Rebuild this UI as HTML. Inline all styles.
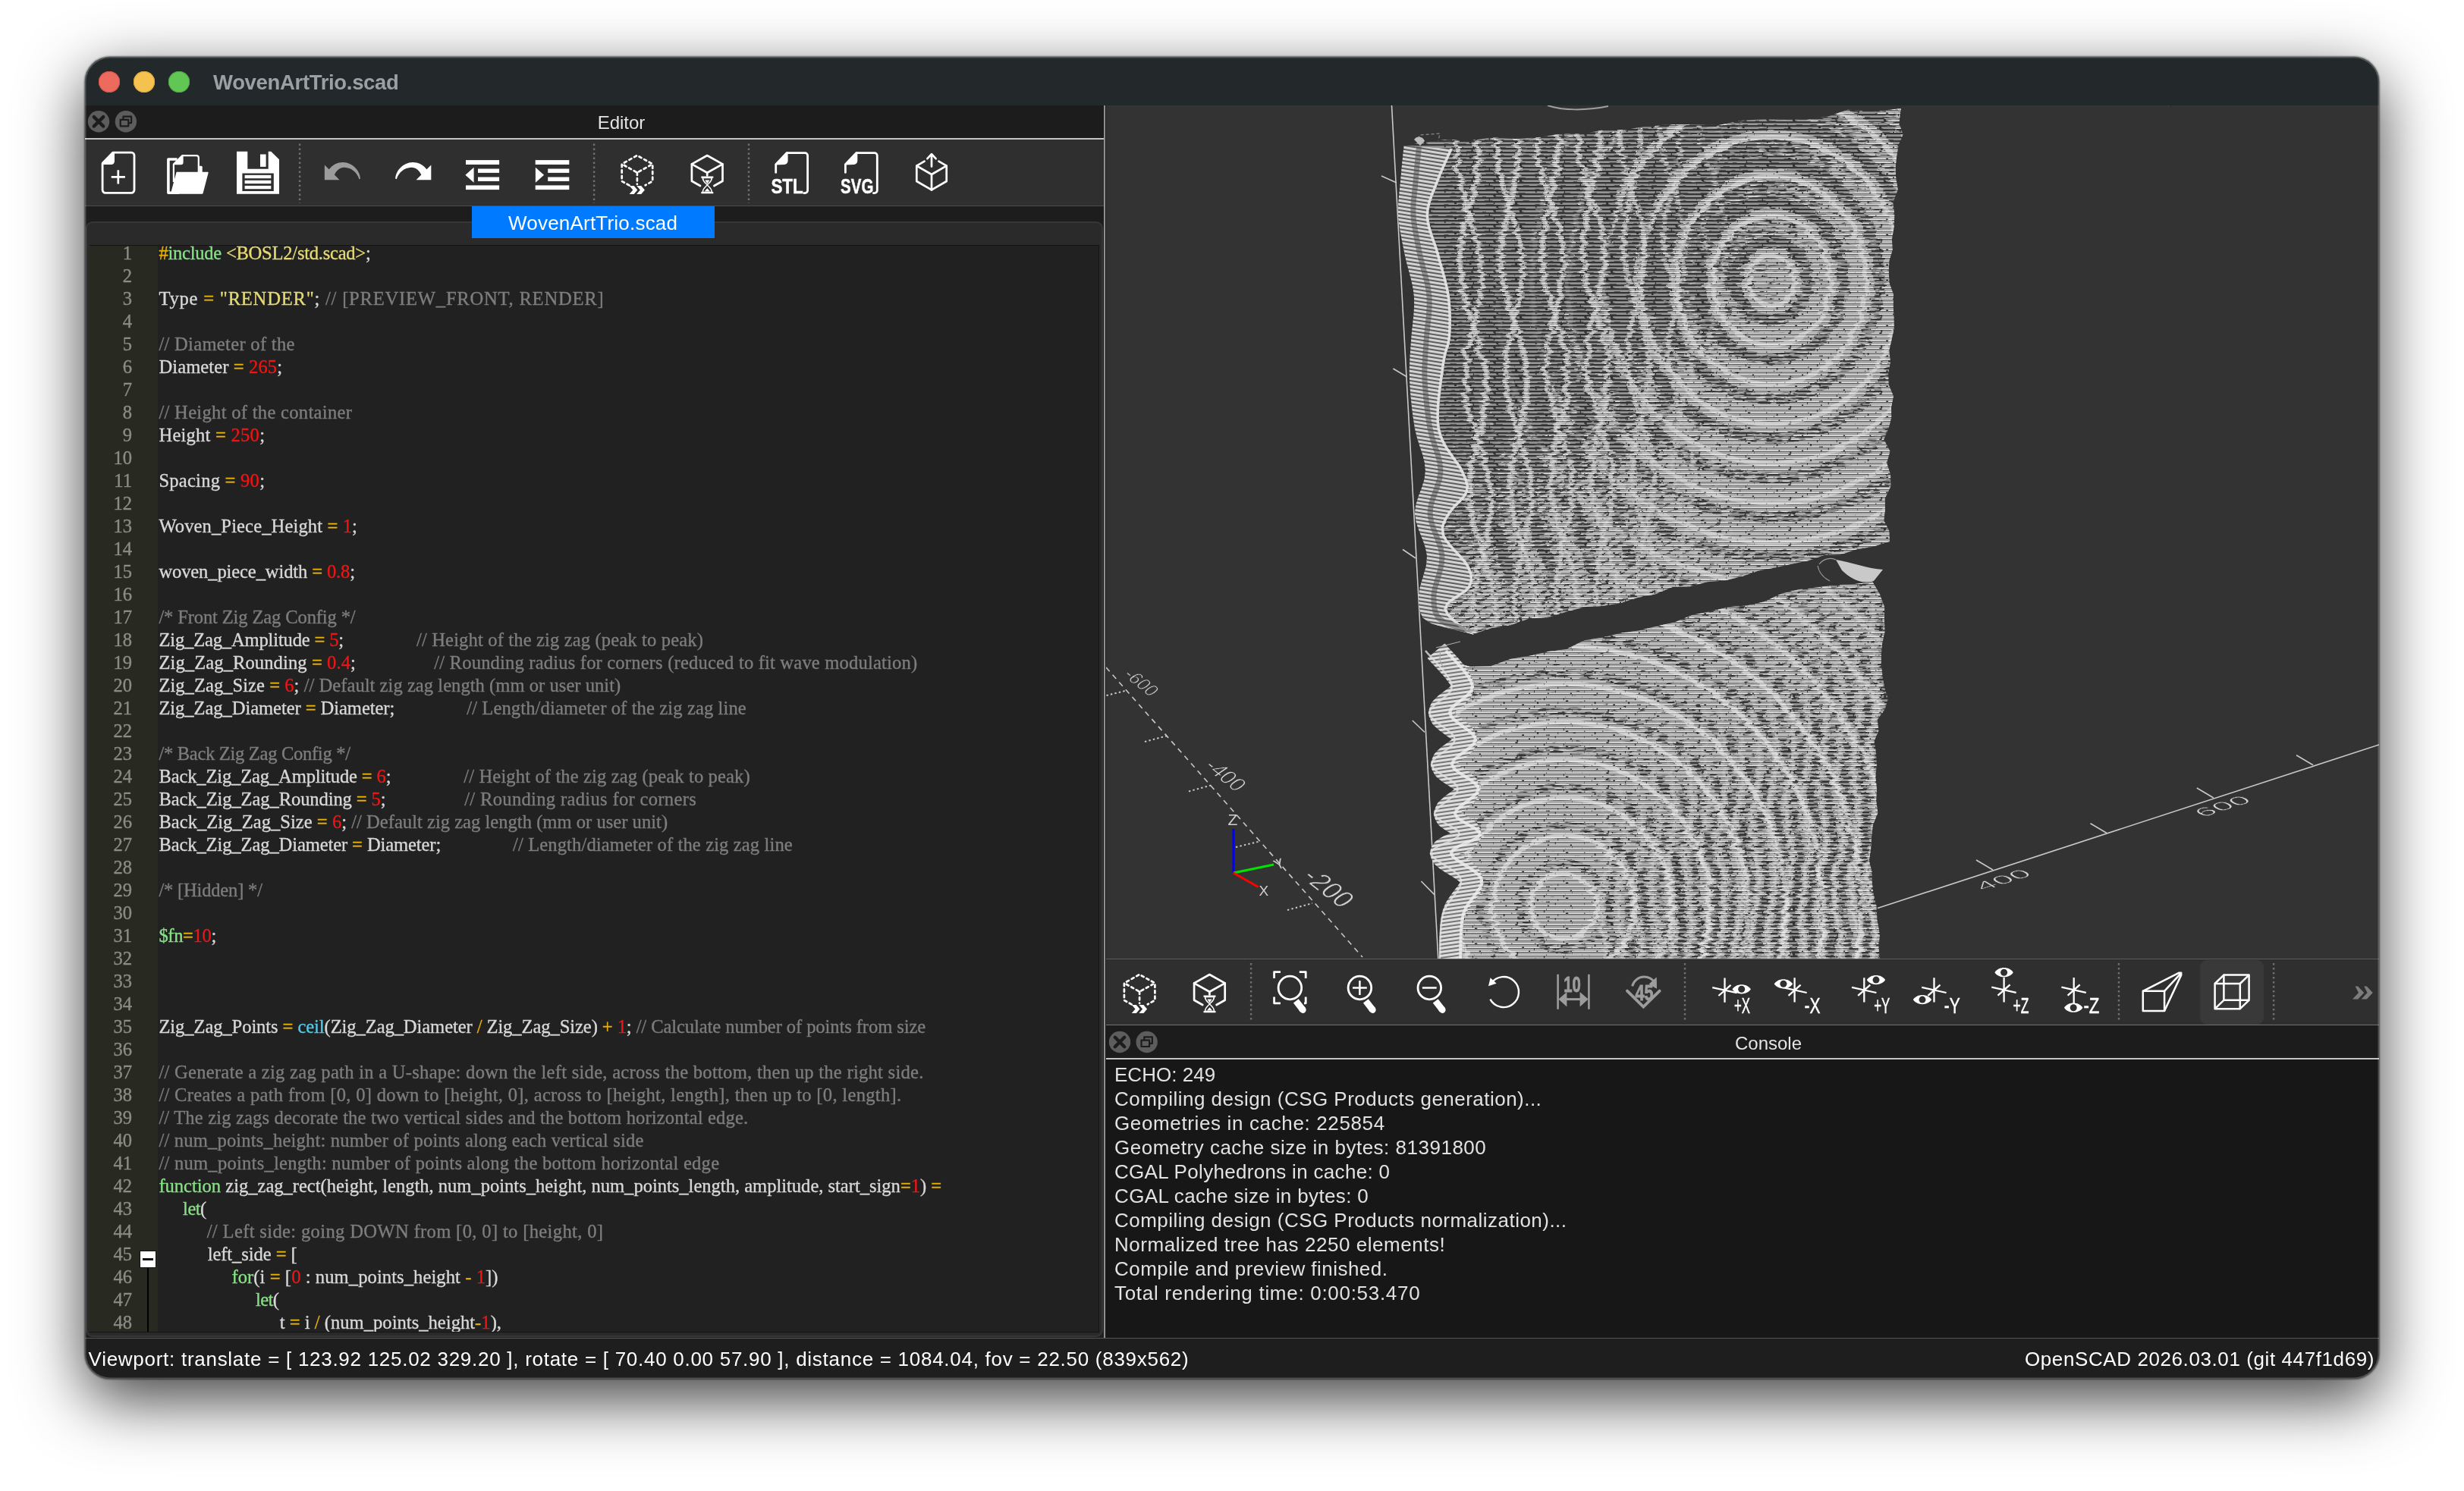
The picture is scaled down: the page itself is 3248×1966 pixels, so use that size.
<!DOCTYPE html>
<html lang="en"><head><meta charset="utf-8"><title>WovenArtTrio.scad</title>
<style>
*{box-sizing:border-box;margin:0;padding:0}
html,body{width:3248px;height:1966px;background:#fff;overflow:hidden}
body{position:relative;font-family:"Liberation Sans",sans-serif;color:#e6e6e6}
#shadow{position:absolute;left:112px;top:75px;width:3024px;height:1743px;border-radius:33px;
 box-shadow:0 27px 84px 0 rgba(0,0,0,.76),0 0 2px 1px rgba(0,0,0,.5);}
#win{position:absolute;left:112px;top:75px;width:3024px;height:1743px;border-radius:33px;overflow:hidden;background:#1e1e1e}
#pg{position:absolute;left:-112px;top:-75px;width:3248px;height:1966px;will-change:transform}
#pg div,#pg svg,#pg span.a{position:absolute}
#rim{position:absolute;left:112px;top:75px;width:3024px;height:1743px;border-radius:33px;
 box-shadow:inset 0 0 0 1.5px rgba(255,255,255,.22);pointer-events:none}
.t{white-space:pre;line-height:1}
#title{left:0;top:75px;width:3248px;height:64px;background:#23282b}
.tl{width:28px;height:28px;border-radius:50%;top:94px}
#ttext{left:281px;top:95px;font-size:27.5px;font-weight:bold;color:#9ba0a4}
.dockhdr{background:#1c1c1c}
.dtitle{font-size:24px;color:#e4e4e4;text-align:center}
.tb{background:#2f2f2f}
.sep{width:0;border-left:3px dotted #6a6a6a}
#code{font-family:"Liberation Serif",serif;font-size:24.6px;color:#d2d2d2;-webkit-text-stroke:.35px currentColor}
#code .l{left:0;height:30px;white-space:pre;line-height:30px}
#code .n{left:0;width:56px;text-align:right;color:#8c8c84;white-space:pre;line-height:30px;height:30px}
.c{color:#7d7d7d}.k{color:#86e086}.o{color:#e8b000}.r{color:#f01414}.s{color:#e6da74}.f{color:#52c8e8}.w{color:#d8d8d8}
#con .l{left:1469px;font-size:26px;color:#e2e2e2;white-space:pre;line-height:32px;height:32px}
</style></head><body>
<div id="shadow"></div>
<div id="win"><div id="pg">
<div id="title"></div>
<div class="tl" style="left:130px;background:#ed6a5f;box-shadow:inset 0 0 0 1px #d5554b"></div>
<div class="tl" style="left:176px;background:#f5c24f;box-shadow:inset 0 0 0 1px #d9a73c"></div>
<div class="tl" style="left:222px;background:#62c655;box-shadow:inset 0 0 0 1px #4eaa42"></div>
<div id="ttext" class="t" style="letter-spacing:-0.330px;">WovenArtTrio.scad</div>

<!-- left dock: editor -->
<div class="dockhdr" style="left:112px;top:139px;width:1343px;height:43px"></div>
<div style="left:112px;top:182px;width:1343px;height:2px;background:#c4c4c4"></div>
<div class="dtitle t" id="edt" style="left:701px;top:150px;width:236px;">Editor</div>
<div class="tb" style="left:112px;top:184px;width:1343px;height:87px"></div>
<div style="left:112px;top:271px;width:1343px;height:1px;background:#4c4c4c"></div>
<div style="left:112px;top:272px;width:1343px;height:22px;background:#1d1d1d"></div>
<div style="left:113px;top:292px;width:1341px;height:1471px;background:#2a2a2a;border:2px solid #363636;border-radius:9px"></div>
<div id="tab" style="left:622px;top:272px;width:320px;height:42px;background:#007aff"></div>
<div class="t" id="tabt" style="left:670px;top:281px;font-size:26px;color:#fff;letter-spacing:0.209px;">WovenArtTrio.scad</div>
<div style="left:118px;top:323px;width:1331px;height:1434px;background:#141414"></div>
<div id="code" style="left:118px;top:324px;width:1330px;height:1432px;background:#212121;overflow:hidden">
<div style="left:0;top:0;width:90px;height:1432px;background:#282a22"></div>
<div class="n" style="top:-5.5px">1</div>
<div class="l" id="c1_0" style="left:91.4px;top:-5.5px;letter-spacing:-0.265px;"><span class="o">#</span><span class="k">include</span><span class="w"> </span><span class="s">&lt;BOSL2/std.scad&gt;</span><span class="w">;</span></div>
<div class="n" style="top:24.5px">2</div>
<div class="n" style="top:54.5px">3</div>
<div class="l" id="c3_0" style="left:91.4px;top:54.5px;letter-spacing:0.774px;"><span class="w">Type </span><span class="o">=</span><span class="w"> </span><span class="s">&quot;RENDER&quot;</span><span class="w">; </span><span class="c">// [PREVIEW_FRONT, RENDER]</span></div>
<div class="n" style="top:84.5px">4</div>
<div class="n" style="top:114.5px">5</div>
<div class="l" id="c5_0" style="left:91.4px;top:114.5px;letter-spacing:0.287px;"><span class="c">// Diameter of the</span></div>
<div class="n" style="top:144.5px">6</div>
<div class="l" id="c6_0" style="left:91.4px;top:144.5px;letter-spacing:0.085px;"><span class="w">Diameter </span><span class="o">=</span><span class="w"> </span><span class="r">265</span><span class="w">;</span></div>
<div class="n" style="top:174.5px">7</div>
<div class="n" style="top:204.5px">8</div>
<div class="l" id="c8_0" style="left:91.4px;top:204.5px;letter-spacing:0.291px;"><span class="c">// Height of the container</span></div>
<div class="n" style="top:234.5px">9</div>
<div class="l" id="c9_0" style="left:91.4px;top:234.5px;letter-spacing:0.226px;"><span class="w">Height </span><span class="o">=</span><span class="w"> </span><span class="r">250</span><span class="w">;</span></div>
<div class="n" style="top:264.5px">10</div>
<div class="n" style="top:294.5px">11</div>
<div class="l" id="c11_0" style="left:91.4px;top:294.5px;letter-spacing:0.226px;"><span class="w">Spacing </span><span class="o">=</span><span class="w"> </span><span class="r">90</span><span class="w">;</span></div>
<div class="n" style="top:324.5px">12</div>
<div class="n" style="top:354.5px">13</div>
<div class="l" id="c13_0" style="left:91.4px;top:354.5px;letter-spacing:0.106px;"><span class="w">Woven_Piece_Height </span><span class="o">=</span><span class="w"> </span><span class="r">1</span><span class="w">;</span></div>
<div class="n" style="top:384.5px">14</div>
<div class="n" style="top:414.5px">15</div>
<div class="l" id="c15_0" style="left:91.4px;top:414.5px;letter-spacing:-0.135px;"><span class="w">woven_piece_width </span><span class="o">=</span><span class="w"> </span><span class="r">0.8</span><span class="w">;</span></div>
<div class="n" style="top:444.5px">16</div>
<div class="n" style="top:474.5px">17</div>
<div class="l" id="c17_0" style="left:91.4px;top:474.5px;letter-spacing:-0.151px;"><span class="c">/* Front Zig Zag Config */</span></div>
<div class="n" style="top:504.5px">18</div>
<div class="l" id="c18_0" style="left:91.4px;top:504.5px;letter-spacing:-0.177px;"><span class="w">Zig_Zag_Amplitude </span><span class="o">=</span><span class="w"> </span><span class="r">5</span><span class="w">;</span></div>
<div class="l" id="c18_1" style="left:431.0px;top:504.5px;letter-spacing:0.132px;"><span class="c">// Height of the zig zag (peak to peak)</span></div>
<div class="n" style="top:534.5px">19</div>
<div class="l" id="c19_0" style="left:91.4px;top:534.5px;letter-spacing:0.079px;"><span class="w">Zig_Zag_Rounding </span><span class="o">=</span><span class="w"> </span><span class="r">0.4</span><span class="w">;</span></div>
<div class="l" id="c19_1" style="left:454.3px;top:534.5px;letter-spacing:0.171px;"><span class="c">// Rounding radius for corners (reduced to fit wave modulation)</span></div>
<div class="n" style="top:564.5px">20</div>
<div class="l" id="c20_0" style="left:91.4px;top:564.5px;letter-spacing:0.024px;"><span class="w">Zig_Zag_Size </span><span class="o">=</span><span class="w"> </span><span class="r">6</span><span class="w">; </span><span class="c">// Default zig zag length (mm or user unit)</span></div>
<div class="n" style="top:594.5px">21</div>
<div class="l" id="c21_0" style="left:91.4px;top:594.5px;letter-spacing:-0.078px;"><span class="w">Zig_Zag_Diameter </span><span class="o">=</span><span class="w"> Diameter;</span></div>
<div class="l" id="c21_1" style="left:497.2px;top:594.5px;letter-spacing:0.106px;"><span class="c">// Length/diameter of the zig zag line</span></div>
<div class="n" style="top:624.5px">22</div>
<div class="n" style="top:654.5px">23</div>
<div class="l" id="c23_0" style="left:91.4px;top:654.5px;letter-spacing:-0.318px;"><span class="c">/* Back Zig Zag Config */</span></div>
<div class="n" style="top:684.5px">24</div>
<div class="l" id="c24_0" style="left:91.4px;top:684.5px;letter-spacing:-0.164px;"><span class="w">Back_Zig_Zag_Amplitude </span><span class="o">=</span><span class="w"> </span><span class="r">6</span><span class="w">;</span></div>
<div class="l" id="c24_1" style="left:493.3px;top:684.5px;letter-spacing:0.119px;"><span class="c">// Height of the zig zag (peak to peak)</span></div>
<div class="n" style="top:714.5px">25</div>
<div class="l" id="c25_0" style="left:91.4px;top:714.5px;letter-spacing:-0.118px;"><span class="w">Back_Zig_Zag_Rounding </span><span class="o">=</span><span class="w"> </span><span class="r">5</span><span class="w">;</span></div>
<div class="l" id="c25_1" style="left:494.2px;top:714.5px;letter-spacing:0.315px;"><span class="c">// Rounding radius for corners</span></div>
<div class="n" style="top:744.5px">26</div>
<div class="l" id="c26_0" style="left:91.4px;top:744.5px;letter-spacing:0.007px;"><span class="w">Back_Zig_Zag_Size </span><span class="o">=</span><span class="w"> </span><span class="r">6</span><span class="w">; </span><span class="c">// Default zig zag length (mm or user unit)</span></div>
<div class="n" style="top:774.5px">27</div>
<div class="l" id="c27_0" style="left:91.4px;top:774.5px;letter-spacing:-0.125px;"><span class="w">Back_Zig_Zag_Diameter </span><span class="o">=</span><span class="w"> Diameter;</span></div>
<div class="l" id="c27_1" style="left:558.0px;top:774.5px;letter-spacing:0.109px;"><span class="c">// Length/diameter of the zig zag line</span></div>
<div class="n" style="top:804.5px">28</div>
<div class="n" style="top:834.5px">29</div>
<div class="l" id="c29_0" style="left:91.4px;top:834.5px;letter-spacing:-0.210px;"><span class="c">/* [Hidden] */</span></div>
<div class="n" style="top:864.5px">30</div>
<div class="n" style="top:894.5px">31</div>
<div class="l" id="c31_0" style="left:91.4px;top:894.5px;letter-spacing:-0.373px;"><span class="k">$fn</span><span class="o">=</span><span class="r">10</span><span class="w">;</span></div>
<div class="n" style="top:924.5px">32</div>
<div class="n" style="top:954.5px">33</div>
<div class="n" style="top:984.5px">34</div>
<div class="n" style="top:1014.5px">35</div>
<div class="l" id="c35_0" style="left:91.4px;top:1014.5px;letter-spacing:-0.096px;"><span class="w">Zig_Zag_Points </span><span class="o">=</span><span class="w"> </span><span class="f">ceil</span><span class="w">(Zig_Zag_Diameter </span><span class="o">/</span><span class="w"> Zig_Zag_Size) </span><span class="o">+</span><span class="w"> </span><span class="r">1</span><span class="w">; </span><span class="c">// Calculate number of points from size</span></div>
<div class="n" style="top:1044.5px">36</div>
<div class="n" style="top:1074.5px">37</div>
<div class="l" id="c37_0" style="left:91.4px;top:1074.5px;letter-spacing:0.261px;"><span class="c">// Generate a zig zag path in a U-shape: down the left side, across the bottom, then up the right side.</span></div>
<div class="n" style="top:1104.5px">38</div>
<div class="l" id="c38_0" style="left:91.4px;top:1104.5px;letter-spacing:0.291px;"><span class="c">// Creates a path from [0, 0] down to [height, 0], across to [height, length], then up to [0, length].</span></div>
<div class="n" style="top:1134.5px">39</div>
<div class="l" id="c39_0" style="left:91.4px;top:1134.5px;letter-spacing:0.141px;"><span class="c">// The zig zags decorate the two vertical sides and the bottom horizontal edge.</span></div>
<div class="n" style="top:1164.5px">40</div>
<div class="l" id="c40_0" style="left:91.4px;top:1164.5px;letter-spacing:0.170px;"><span class="c">// num_points_height: number of points along each vertical side</span></div>
<div class="n" style="top:1194.5px">41</div>
<div class="l" id="c41_0" style="left:91.4px;top:1194.5px;letter-spacing:0.238px;"><span class="c">// num_points_length: number of points along the bottom horizontal edge</span></div>
<div class="n" style="top:1224.5px">42</div>
<div class="l" id="c42_0" style="left:91.4px;top:1224.5px;letter-spacing:-0.028px;"><span class="k">function</span><span class="w"> zig_zag_rect(height, length, num_points_height, num_points_length, amplitude, start_sign</span><span class="o">=</span><span class="r">1</span><span class="w">) </span><span class="o">=</span></div>
<div class="n" style="top:1254.5px">43</div>
<div class="l" id="c43_0" style="left:123.1px;top:1254.5px;letter-spacing:-0.524px;"><span class="k">let</span><span class="w">(</span></div>
<div class="n" style="top:1284.5px">44</div>
<div class="l" id="c44_0" style="left:154.7px;top:1284.5px;letter-spacing:0.338px;"><span class="c">// Left side: going DOWN from [0, 0] to [height, 0]</span></div>
<div class="n" style="top:1314.5px">45</div>
<div class="l" id="c45_0" style="left:155.7px;top:1314.5px;letter-spacing:-0.089px;"><span class="w">left_side </span><span class="o">=</span><span class="w"> [</span></div>
<div class="n" style="top:1344.5px">46</div>
<div class="l" id="c46_0" style="left:187.4px;top:1344.5px;letter-spacing:0.072px;"><span class="k">for</span><span class="w">(i </span><span class="o">=</span><span class="w"> [</span><span class="r">0</span><span class="w"> : num_points_height </span><span class="o">-</span><span class="w"> </span><span class="r">1</span><span class="w">])</span></div>
<div class="n" style="top:1374.5px">47</div>
<div class="l" id="c47_0" style="left:219.0px;top:1374.5px;letter-spacing:-0.649px;"><span class="k">let</span><span class="w">(</span></div>
<div class="n" style="top:1404.5px">48</div>
<div class="l" id="c48_0" style="left:250.7px;top:1404.5px;letter-spacing:0.012px;"><span class="w">t </span><span class="o">=</span><span class="w"> i </span><span class="o">/</span><span class="w"> (num_points_height</span><span class="o">-</span><span class="r">1</span><span class="w">),</span></div>
<div style="left:66px;top:1325px;width:22px;height:23px;background:#fff;border:1.5px solid #111"></div>
<div style="left:70px;top:1335px;width:14px;height:3px;background:#111"></div>
<div style="left:76px;top:1348px;width:2px;height:90px;background:#000"></div>
</div>

<!-- splitter -->
<div style="left:1455px;top:139px;width:3px;height:1625px;background:#1f1f1f"></div>
<div style="left:1455px;top:139px;width:2px;height:1625px;background:#8f8f8f"></div>

<!-- viewport -->
<div id="view" style="left:1458px;top:139px;width:1678px;height:1125px;background:#333333;overflow:hidden">
<svg style="left:0;top:0" width="1678" height="1125" viewBox="1458 139 1678 1125">
<defs>
<pattern id="stD" width="120" height="20" patternUnits="userSpaceOnUse"><rect width="120" height="20" fill="#333333"/><rect x="-26.2" y="2.2" width="39.2" height="2.2" fill="#8f8f8f"/><rect x="13.6" y="2.2" width="29.1" height="2.2" fill="#8f8f8f"/><rect x="44" y="2.2" width="32.2" height="2.2" fill="#8f8f8f"/><rect x="76.7" y="2.2" width="45.8" height="2.2" fill="#8f8f8f"/><rect x="-14" y="4.3" width="16.7" height="0.7" fill="#b8b8b8"/><rect x="7.4" y="4.3" width="9.8" height="0.7" fill="#b8b8b8"/><rect x="24" y="4.3" width="12.8" height="0.7" fill="#b8b8b8"/><rect x="47.4" y="4.3" width="10.9" height="0.7" fill="#b8b8b8"/><rect x="62.5" y="4.3" width="25.1" height="0.7" fill="#b8b8b8"/><rect x="95.8" y="4.3" width="10.6" height="0.7" fill="#b8b8b8"/><rect x="114.8" y="4.3" width="8.5" height="0.7" fill="#b8b8b8"/><rect x="-29.4" y="7.2" width="46.2" height="2.2" fill="#8f8f8f"/><rect x="19.6" y="7.2" width="29.3" height="2.2" fill="#8f8f8f"/><rect x="50.4" y="7.2" width="26.7" height="2.2" fill="#8f8f8f"/><rect x="80.1" y="7.2" width="36.9" height="2.2" fill="#8f8f8f"/><rect x="-9.9" y="9.3" width="12" height="0.7" fill="#b8b8b8"/><rect x="12.6" y="9.3" width="25.7" height="0.7" fill="#b8b8b8"/><rect x="49.2" y="9.3" width="22.5" height="0.7" fill="#b8b8b8"/><rect x="82.2" y="9.3" width="21.3" height="0.7" fill="#b8b8b8"/><rect x="109.4" y="9.3" width="17.3" height="0.7" fill="#b8b8b8"/><rect x="-0.9" y="12.2" width="22.8" height="2.2" fill="#8f8f8f"/><rect x="23" y="12.2" width="29.3" height="2.2" fill="#8f8f8f"/><rect x="55.1" y="12.2" width="48.8" height="2.2" fill="#8f8f8f"/><rect x="105.6" y="12.2" width="48.2" height="2.2" fill="#8f8f8f"/><rect x="-28.7" y="14.3" width="14.6" height="0.7" fill="#b8b8b8"/><rect x="-8.3" y="14.3" width="12.1" height="0.7" fill="#b8b8b8"/><rect x="9.3" y="14.3" width="11.7" height="0.7" fill="#b8b8b8"/><rect x="30" y="14.3" width="24.2" height="0.7" fill="#b8b8b8"/><rect x="64.9" y="14.3" width="16.6" height="0.7" fill="#b8b8b8"/><rect x="90.8" y="14.3" width="22.4" height="0.7" fill="#b8b8b8"/><rect x="117.9" y="14.3" width="19.9" height="0.7" fill="#b8b8b8"/><rect x="-23.5" y="17.2" width="43" height="2.2" fill="#8f8f8f"/><rect x="21.4" y="17.2" width="27" height="2.2" fill="#8f8f8f"/><rect x="51.6" y="17.2" width="31.3" height="2.2" fill="#8f8f8f"/><rect x="86.1" y="17.2" width="49.2" height="2.2" fill="#8f8f8f"/><rect x="-12" y="19.3" width="25" height="0.7" fill="#b8b8b8"/><rect x="22.8" y="19.3" width="11.1" height="0.7" fill="#b8b8b8"/><rect x="38.9" y="19.3" width="10.7" height="0.7" fill="#b8b8b8"/><rect x="60.8" y="19.3" width="22.5" height="0.7" fill="#b8b8b8"/><rect x="88.5" y="19.3" width="22.9" height="0.7" fill="#b8b8b8"/></pattern>
<pattern id="stL" width="120" height="20" patternUnits="userSpaceOnUse"><rect width="120" height="20" fill="#363636"/><rect x="-19.7" y="0.7" width="40.5" height="2.8" fill="#a8a8a8"/><rect x="21.9" y="0.7" width="33.9" height="2.8" fill="#a8a8a8"/><rect x="55.8" y="0.7" width="59.1" height="2.8" fill="#a8a8a8"/><rect x="116.3" y="0.7" width="45.8" height="2.8" fill="#a8a8a8"/><rect x="-13" y="3.5" width="36.9" height="1.5" fill="#eeeeee"/><rect x="27.2" y="3.5" width="21.1" height="1.5" fill="#eeeeee"/><rect x="49.3" y="3.5" width="23" height="1.5" fill="#eeeeee"/><rect x="73.3" y="3.5" width="30.1" height="1.5" fill="#eeeeee"/><rect x="104.4" y="3.5" width="26.1" height="1.5" fill="#eeeeee"/><rect x="-27.3" y="5.7" width="40.6" height="2.8" fill="#a8a8a8"/><rect x="14.2" y="5.7" width="47.5" height="2.8" fill="#a8a8a8"/><rect x="63.5" y="5.7" width="42.6" height="2.8" fill="#a8a8a8"/><rect x="108" y="5.7" width="45" height="2.8" fill="#a8a8a8"/><rect x="-15.7" y="8.5" width="16.4" height="1.5" fill="#eeeeee"/><rect x="2.5" y="8.5" width="20.4" height="1.5" fill="#eeeeee"/><rect x="22.9" y="8.5" width="35.2" height="1.5" fill="#eeeeee"/><rect x="58.8" y="8.5" width="27.4" height="1.5" fill="#eeeeee"/><rect x="89" y="8.5" width="29.4" height="1.5" fill="#eeeeee"/><rect x="119.7" y="8.5" width="28.4" height="1.5" fill="#eeeeee"/><rect x="-23.5" y="10.7" width="33.2" height="2.8" fill="#a8a8a8"/><rect x="10.8" y="10.7" width="37.5" height="2.8" fill="#a8a8a8"/><rect x="48.8" y="10.7" width="53.2" height="2.8" fill="#a8a8a8"/><rect x="103" y="10.7" width="46.9" height="2.8" fill="#a8a8a8"/><rect x="-27.4" y="13.5" width="26.6" height="1.5" fill="#eeeeee"/><rect x="1.7" y="13.5" width="28.1" height="1.5" fill="#eeeeee"/><rect x="31.9" y="13.5" width="32.6" height="1.5" fill="#eeeeee"/><rect x="66.3" y="13.5" width="28.8" height="1.5" fill="#eeeeee"/><rect x="97" y="13.5" width="38.6" height="1.5" fill="#eeeeee"/><rect x="-26.3" y="15.7" width="58.3" height="2.8" fill="#a8a8a8"/><rect x="32.5" y="15.7" width="46.8" height="2.8" fill="#a8a8a8"/><rect x="81.2" y="15.7" width="55.2" height="2.8" fill="#a8a8a8"/><rect x="-3.6" y="18.5" width="26.6" height="1.5" fill="#eeeeee"/><rect x="23.3" y="18.5" width="21.8" height="1.5" fill="#eeeeee"/><rect x="45.3" y="18.5" width="32.1" height="1.5" fill="#eeeeee"/><rect x="80.5" y="18.5" width="37.5" height="1.5" fill="#eeeeee"/><rect x="118.7" y="18.5" width="33.2" height="1.5" fill="#eeeeee"/></pattern>
<pattern id="sb" width="60" height="5" patternUnits="userSpaceOnUse" patternTransform="rotate(9)"><rect width="60" height="5" fill="#5e5e5e"/><rect y="1" width="60" height="2.9" fill="#d6d6d6"/></pattern>
<pattern id="sb2" width="60" height="5" patternUnits="userSpaceOnUse" patternTransform="rotate(-8)"><rect width="60" height="5" fill="#707070"/><rect y="1" width="60" height="3.1" fill="#dedede"/></pattern>
<pattern id="hx" width="16" height="11" patternUnits="userSpaceOnUse" patternTransform="rotate(-32)"><rect y="0" width="16" height="3.2" fill="#000"/></pattern>
<pattern id="hz" width="16" height="15" patternUnits="userSpaceOnUse" patternTransform="rotate(-27)"><rect y="0" width="16" height="4.6" fill="#000"/></pattern>
<clipPath id="c1"><path d="M1850 192L1877.5 187.9L1905 183.9L1935.8 185.8L1966.5 181.3L1997.2 183L2028 180.9L2056.9 176.4L2085.8 176.5L2114.8 171.1L2143.7 170.9L2172.6 166.1L2203.6 164.3L2234.6 164.4L2265.5 164.9L2296.5 158.7L2324.9 157.3L2353.2 157.8L2381.6 157.7L2410 153.5L2436 144.4L2470.8 146.9L2505.7 143L2503.4 163L2508.6 177L2502.7 191L2500.3 205L2498.7 219L2499 233L2501.8 249.9L2495.4 266.8L2497.3 283.6L2496.5 300.5L2493.9 315L2494.7 329.4L2490.3 343.9L2489.8 358.3L2490.4 372.8L2496 388.2L2495.7 403.6L2496.5 419L2496.6 433.5L2493.5 448L2490.2 462.6L2492 477.1L2489.2 491.6L2489.5 507.1L2496 522.6L2493 536.8L2493.2 551L2489.4 565.2L2483.3 579.4L2491.4 594.9L2487.1 610.4L2492.1 625.9L2492.3 641.4L2484.8 656.9L2484.9 672.4L2483.3 686.3L2490.3 700.1L2491 714L2469.4 720.7L2447.8 724.2L2426.2 731.2L2404.6 732.1L2382.9 739.6L2361.3 743.7L2339.7 748.5L2318.1 752.4L2296.5 760L2273.6 765.6L2250.6 767.2L2227.7 773.4L2204.7 774L2181.8 783.4L2158.8 787.9L2135.9 795.2L2112.9 798.9L2090 800L2065.3 806.5L2040.7 814.2L2016 815.4L1991.3 824.2L1966.7 827.9L1942 836L1934 834.2L1922.5 831.7L1910.2 828.8L1900 826L1885.8 821.8L1876 815L1872 806.9L1870.1 796.6L1870 784L1871.5 775.2L1874.5 765.3L1877.7 754.7L1880.3 743.8L1881 733L1879 722.1L1875.1 711L1870.5 699.6L1866.7 688.3L1865 677L1866.3 665.8L1869.8 654.6L1874 643.4L1877.5 632.2L1879 621L1877.9 609.9L1875.1 599L1871.4 588L1867.8 576.8L1865 565L1863.3 554.5L1861.8 543.4L1860.5 532.1L1859.4 520.9L1858.6 510.1L1858 500L1857.8 489.2L1858.1 479.4L1858.6 469.9L1859.3 460.3L1860 450L1860.9 438.7L1862.2 426.8L1863.5 414.7L1864.2 402.6L1864 391L1862.6 379.9L1860.2 369L1857.4 358.3L1854.5 347.7L1852 337L1849.8 326.2L1847.6 315.3L1845.6 304.5L1844 294L1843 284L1842.9 272.3L1843.7 261.3L1844.9 250.6L1846 240L1847 228.5L1848.1 216.6L1849.2 205.9L1850 198L1850.8 192.4Z"/></clipPath>
<clipPath id="c2"><path d="M1893 858L1910.6 871.3L1938 878.9L1964.5 878.6L1990.9 868.9L2017.4 864.4L2041.1 859.1L2064.8 856.1L2088.6 844.2L2112.3 840.5L2136 834.8L2159.8 831.6L2183.5 825.7L2207.3 820.4L2231 810.8L2254.8 806.2L2278.5 800.3L2302.3 798.4L2326 793.3L2349.8 782.1L2373.5 776.7L2397.2 774.2L2420.9 771.3L2444.7 770.1L2468.4 767.3L2477.9 783.6L2484.1 800L2484 818.7L2484.4 833.5L2481.1 848.4L2479.8 863.2L2479.9 878L2481.7 892.5L2484.2 907.1L2488.9 921.6L2484.5 935.5L2474.6 949.3L2476.5 963.1L2470.6 977L2473 992.8L2473.9 1008.6L2472.3 1024.4L2473.9 1040.2L2473.1 1056L2475.4 1071.8L2468.9 1087.6L2467 1103.4L2466.1 1119.2L2463.8 1135L2467.7 1149.9L2467.8 1164.8L2469.9 1179.7L2473.5 1194.6L2474.4 1213.1L2477.9 1231.5L2476.5 1250L2478 1266L1912 1266L1912.2 1261.2L1912.2 1254.7L1912.3 1246.9L1912.5 1238.3L1912.9 1229.4L1913.5 1220.6L1914.5 1212.3L1916 1205L1918.9 1197.6L1923.3 1190.7L1928.2 1184.1L1933.1 1177.7L1937.2 1171.7L1939.8 1165.8L1940 1160L1937 1154.4L1931 1149L1923.2 1143.8L1915 1138.8L1907.6 1134L1902.2 1129.4L1900 1125L1902.6 1120.3L1909.5 1116L1918.6 1112L1927.7 1108.1L1934.9 1104.2L1938 1100L1935.9 1095.7L1929.9 1091.4L1921.9 1087L1913.9 1082.5L1907.6 1077.9L1905 1073L1907.2 1067.8L1913 1062.4L1920.6 1056.8L1928.2 1051.1L1933.9 1045.5L1936 1040L1933.2 1034.6L1926.8 1029.3L1918.5 1024L1910.2 1018.7L1903.8 1013.4L1901 1008L1903.1 1002.6L1908.9 997.1L1916.4 991.7L1924 986.2L1929.8 980.6L1932 975L1929.4 969.3L1923.1 963.5L1915.1 957.6L1907 951.7L1900.7 945.9L1898 940L1900 934.3L1905.7 928.8L1913.1 923.2L1920.4 917.6L1926 911.5L1928 905L1926.5 899.4L1923 893L1918.1 886.2L1912.4 879.3L1906.4 872.7L1900.8 866.7L1896.1 861.7L1893 858Z"/></clipPath>
<clipPath id="cb1"><path d="M1934 834.2L1922.5 831.7L1910.2 828.8L1900 826L1885.8 821.8L1876 815L1872 806.9L1870.1 796.6L1870 784L1871.5 775.2L1874.5 765.3L1877.7 754.7L1880.3 743.8L1881 733L1879 722.1L1875.1 711L1870.5 699.6L1866.7 688.3L1865 677L1866.3 665.8L1869.8 654.6L1874 643.4L1877.5 632.2L1879 621L1877.9 609.9L1875.1 599L1871.4 588L1867.8 576.8L1865 565L1863.3 554.5L1861.8 543.4L1860.5 532.1L1859.4 520.9L1858.6 510.1L1858 500L1857.8 489.2L1858.1 479.4L1858.6 469.9L1859.3 460.3L1860 450L1860.9 438.7L1862.2 426.8L1863.5 414.7L1864.2 402.6L1864 391L1862.6 379.9L1860.2 369L1857.4 358.3L1854.5 347.7L1852 337L1849.8 326.2L1847.6 315.3L1845.6 304.5L1844 294L1843 284L1842.9 272.3L1843.7 261.3L1844.9 250.6L1846 240L1847 228.5L1848.1 216.6L1849.2 205.9L1850 198L1850.8 192.4L1851 192L1915 196L1912.3 202L1908.5 210.4L1904.1 220.3L1899.7 230.5L1896 240L1892.6 248.7L1889.1 257.3L1886 265.9L1883.8 274.8L1883 284L1883.8 292L1885.7 300.3L1888.3 308.8L1891.3 317.4L1894.4 326.1L1897 335L1899.1 342.8L1901.4 350.7L1903.7 358.8L1905.9 366.9L1907.9 375L1909.7 383.1L1911 391L1912 400.3L1912.6 409.9L1912.9 419.3L1912.8 428.5L1912.5 437.1L1912 445L1910.6 453.9L1908.4 460.6L1906.1 468.2L1904 480L1903.2 486.6L1902.1 494.3L1900.9 502.7L1899.7 511.8L1898.6 521.2L1897.6 530.7L1897 540.1L1896.8 549.1L1897.1 557.4L1898 565L1900.3 573.6L1903.7 581.7L1908 589.4L1912.8 596.6L1917.6 603.3L1922.1 609.6L1926.1 615.5L1929 621L1933.9 632.4L1936.1 640.7L1935 649L1930.9 656L1924.4 663L1917.4 670L1912 677L1906.7 685.8L1903.1 694.6L1904 705L1907.5 711.4L1913.1 718.5L1919.9 726L1926.9 733.5L1932.9 740.6L1937 747L1940.9 757.4L1941.2 766.2L1938 775L1932.8 780.5L1924.7 785.9L1916.1 791.4L1909.4 797L1907 803L1909.5 808.7L1915.4 815.1L1923.1 821.8L1931.2 828L1938.3 833.2L1943 837Z"/></clipPath>
<filter id="j1" filterUnits="userSpaceOnUse" x="1800" y="120" width="760" height="760" color-interpolation-filters="sRGB"><feTurbulence type="fractalNoise" baseFrequency="0.006 0.2" numOctaves="2" seed="3" result="n"/><feColorMatrix in="n" type="matrix" values="1 0 0 0 0  0 0 0 0 .5  0 0 0 0 .5  0 0 0 0 1" result="m"/><feDisplacementMap in="SourceGraphic" in2="m" scale="18" xChannelSelector="R" yChannelSelector="G" result="d"/><feTurbulence type="fractalNoise" baseFrequency=".07 .33" numOctaves="2" seed="8" result="n2"/><feColorMatrix in="n2" type="matrix" values="1 0 0 0 0  1 0 0 0 0  1 0 0 0 0  0 0 0 0 1" result="g2"/><feComposite in="d" in2="g2" operator="arithmetic" k1="0" k2="1" k3="1.1" k4="-0.55" result="s"/><feComponentTransfer in="s"><feFuncR type="linear" slope="9" intercept="-4"/><feFuncG type="linear" slope="9" intercept="-4"/><feFuncB type="linear" slope="9" intercept="-4"/><feFuncA type="linear" slope="0" intercept="1"/></feComponentTransfer></filter>
<filter id="j2" filterUnits="userSpaceOnUse" x="1850" y="740" width="680" height="540" color-interpolation-filters="sRGB"><feTurbulence type="fractalNoise" baseFrequency="0.006 0.2" numOctaves="2" seed="11" result="n"/><feColorMatrix in="n" type="matrix" values="1 0 0 0 0  0 0 0 0 .5  0 0 0 0 .5  0 0 0 0 1" result="m"/><feDisplacementMap in="SourceGraphic" in2="m" scale="18" xChannelSelector="R" yChannelSelector="G" result="d"/><feTurbulence type="fractalNoise" baseFrequency=".07 .33" numOctaves="2" seed="16" result="n2"/><feColorMatrix in="n2" type="matrix" values="1 0 0 0 0  1 0 0 0 0  1 0 0 0 0  0 0 0 0 1" result="g2"/><feComposite in="d" in2="g2" operator="arithmetic" k1="0" k2="1" k3="1.1" k4="-0.55" result="s"/><feComponentTransfer in="s"><feFuncR type="linear" slope="9" intercept="-4"/><feFuncG type="linear" slope="9" intercept="-4"/><feFuncB type="linear" slope="9" intercept="-4"/><feFuncA type="linear" slope="0" intercept="1"/></feComponentTransfer></filter>
<filter id="d1" filterUnits="userSpaceOnUse" x="1800" y="120" width="760" height="760" color-interpolation-filters="sRGB"><feTurbulence type="fractalNoise" baseFrequency="0.006 0.2" numOctaves="2" seed="3" result="n"/><feColorMatrix in="n" type="matrix" values="1 0 0 0 0  0 0 0 0 .5  0 0 0 0 .5  0 0 0 0 1" result="m"/><feDisplacementMap in="SourceGraphic" in2="m" scale="18" xChannelSelector="R" yChannelSelector="G"/></filter>
<filter id="d2" filterUnits="userSpaceOnUse" x="1850" y="740" width="680" height="540" color-interpolation-filters="sRGB"><feTurbulence type="fractalNoise" baseFrequency="0.006 0.2" numOctaves="2" seed="11" result="n"/><feColorMatrix in="n" type="matrix" values="1 0 0 0 0  0 0 0 0 .5  0 0 0 0 .5  0 0 0 0 1" result="m"/><feDisplacementMap in="SourceGraphic" in2="m" scale="18" xChannelSelector="R" yChannelSelector="G"/></filter>
<radialGradient id="g1r" gradientUnits="userSpaceOnUse" cx="2335" cy="370" r="640"><stop offset="0" stop-color="#fff" stop-opacity="1"/><stop offset="0.6" stop-color="#fff" stop-opacity="1"/><stop offset="0.85" stop-color="#fff" stop-opacity="0.7"/><stop offset="1" stop-color="#fff" stop-opacity="0.45"/></radialGradient>
<linearGradient id="g1w" gradientUnits="userSpaceOnUse" x1="1880" y1="0" x2="2330" y2="0"><stop offset="0" stop-color="#fff" stop-opacity="1"/><stop offset="0.45" stop-color="#fff" stop-opacity="0.9"/><stop offset="0.8" stop-color="#fff" stop-opacity="0.35"/><stop offset="1" stop-color="#fff" stop-opacity="0"/></linearGradient>
<linearGradient id="g1h" gradientUnits="userSpaceOnUse" x1="1900" y1="820" x2="2330" y2="330"><stop offset="0" stop-color="#fff" stop-opacity="1"/><stop offset="0.45" stop-color="#fff" stop-opacity="0.7"/><stop offset="0.75" stop-color="#fff" stop-opacity="0.15"/><stop offset="1" stop-color="#fff" stop-opacity="0"/></linearGradient>
<linearGradient id="g1b" gradientUnits="userSpaceOnUse" x1="1950" y1="0" x2="2450" y2="0"><stop offset="0" stop-color="rgb(5,5,5)"/><stop offset="0.35" stop-color="rgb(30,30,30)"/><stop offset="0.7" stop-color="rgb(91,91,91)"/><stop offset="1" stop-color="rgb(107,107,107)"/></linearGradient>
<linearGradient id="g1c" gradientUnits="userSpaceOnUse" x1="2520" y1="780" x2="2160" y2="330"><stop offset="0" stop-color="#fff" stop-opacity="1"/><stop offset="0.45" stop-color="#fff" stop-opacity="1"/><stop offset="0.75" stop-color="#fff" stop-opacity="0.45"/><stop offset="1" stop-color="#fff" stop-opacity="0"/></linearGradient>
<radialGradient id="g2r" gradientUnits="userSpaceOnUse" cx="2061" cy="1195" r="560"><stop offset="0" stop-color="#fff" stop-opacity="1"/><stop offset="0.7" stop-color="#fff" stop-opacity="1"/><stop offset="1" stop-color="#fff" stop-opacity="0.5"/></radialGradient>
<linearGradient id="g2w" gradientUnits="userSpaceOnUse" x1="2180" y1="880" x2="2380" y2="1180"><stop offset="0" stop-color="#fff" stop-opacity="0"/><stop offset="0.5" stop-color="#fff" stop-opacity="0.6"/><stop offset="1" stop-color="#fff" stop-opacity="1"/></linearGradient>
<linearGradient id="g2b" gradientUnits="userSpaceOnUse" x1="1950" y1="900" x2="2450" y2="1100"><stop offset="0" stop-color="rgb(247,247,247)"/><stop offset="0.5" stop-color="rgb(234,234,234)"/><stop offset="1" stop-color="rgb(214,214,214)"/></linearGradient>
<linearGradient id="g2h" gradientUnits="userSpaceOnUse" x1="2000" y1="1200" x2="2470" y2="800"><stop offset="0" stop-color="#fff" stop-opacity="0.1"/><stop offset="0.4" stop-color="#fff" stop-opacity="0.45"/><stop offset="1" stop-color="#fff" stop-opacity="1"/></linearGradient>
<mask id="m1r" maskUnits="userSpaceOnUse" x="1800" y="120" width="760" height="760"><rect x="1800" y="120" width="760" height="760" fill="url(#g1r)" /></mask>
<mask id="m1w" maskUnits="userSpaceOnUse" x="1800" y="120" width="760" height="760"><rect x="1800" y="120" width="760" height="760" fill="url(#g1w)" /></mask>
<mask id="m1h" maskUnits="userSpaceOnUse" x="1800" y="120" width="760" height="760"><rect x="1800" y="120" width="760" height="760" fill="url(#g1h)" /></mask>
<linearGradient id="g1x" gradientUnits="userSpaceOnUse" x1="1930" y1="0" x2="2260" y2="0"><stop offset="0" stop-color="#fff" stop-opacity="0.12"/><stop offset="0.5" stop-color="#fff" stop-opacity="0.4"/><stop offset="1" stop-color="#fff" stop-opacity="1"/></linearGradient>
<mask id="m1x" maskUnits="userSpaceOnUse" x="1800" y="120" width="760" height="760"><rect x="1800" y="120" width="760" height="760" fill="url(#g1x)" /></mask>
<mask id="m2r" maskUnits="userSpaceOnUse" x="1850" y="740" width="680" height="540"><rect x="1850" y="740" width="680" height="540" fill="url(#g2r)" /></mask>
<mask id="m2w" maskUnits="userSpaceOnUse" x="1850" y="740" width="680" height="540"><rect x="1850" y="740" width="680" height="540" fill="url(#g2w)" /></mask>
<mask id="m2h" maskUnits="userSpaceOnUse" x="1850" y="740" width="680" height="540"><rect x="1850" y="740" width="680" height="540" fill="url(#g2h)" /></mask>
<mask id="mk1" maskUnits="userSpaceOnUse" x="1800" y="120" width="760" height="760" style="mask-type:luminance"><g filter="url(#j1)"><rect x="1800" y="120" width="760" height="760" fill="#000" /><rect x="1800" y="120" width="760" height="760" fill="url(#g1b)" /><rect x="1800" y="120" width="760" height="760" fill="url(#g1c)" /><g mask="url(#m1h)"><rect x="1800" y="120" width="760" height="760" fill="url(#hx)" fill-opacity=".7"/></g><g mask="url(#m1x)"><g mask="url(#m1r)"><g fill="none" stroke="#000" stroke-opacity="0.5"><ellipse cx="2335" cy="370" rx="47.5" ry="52" stroke-width="15"/><ellipse cx="2335" cy="370" rx="95" ry="104" stroke-width="15"/><ellipse cx="2335" cy="370" rx="142.5" ry="156" stroke-width="15"/><ellipse cx="2335" cy="370" rx="190" ry="208" stroke-width="15"/><ellipse cx="2335" cy="370" rx="237.5" ry="260" stroke-width="15"/><ellipse cx="2335" cy="370" rx="285" ry="312" stroke-width="15"/><ellipse cx="2335" cy="370" rx="332.5" ry="364" stroke-width="15"/><ellipse cx="2335" cy="370" rx="380" ry="416" stroke-width="15"/><ellipse cx="2335" cy="370" rx="427.5" ry="468" stroke-width="15"/><ellipse cx="2335" cy="370" rx="475" ry="520" stroke-width="15"/><ellipse cx="2335" cy="370" rx="522.5" ry="572" stroke-width="15"/><ellipse cx="2335" cy="370" rx="570" ry="624" stroke-width="15"/><ellipse cx="2335" cy="370" rx="617.5" ry="676" stroke-width="15"/><ellipse cx="2335" cy="370" rx="665" ry="728" stroke-width="15"/></g><g fill="none" stroke="#fff" stroke-opacity="0.95"><ellipse cx="2335" cy="370" rx="33.2" ry="36.4" stroke-width="12"/><ellipse cx="2335" cy="370" rx="80.8" ry="88.4" stroke-width="12"/><ellipse cx="2335" cy="370" rx="128.2" ry="140.4" stroke-width="12"/><ellipse cx="2335" cy="370" rx="175.8" ry="192.4" stroke-width="12"/><ellipse cx="2335" cy="370" rx="223.2" ry="244.4" stroke-width="12"/><ellipse cx="2335" cy="370" rx="270.8" ry="296.4" stroke-width="12"/><ellipse cx="2335" cy="370" rx="318.2" ry="348.4" stroke-width="12"/><ellipse cx="2335" cy="370" rx="365.8" ry="400.4" stroke-width="12"/><ellipse cx="2335" cy="370" rx="413.2" ry="452.4" stroke-width="12"/><ellipse cx="2335" cy="370" rx="460.8" ry="504.4" stroke-width="12"/><ellipse cx="2335" cy="370" rx="508.2" ry="556.4" stroke-width="12"/><ellipse cx="2335" cy="370" rx="555.8" ry="608.4" stroke-width="12"/><ellipse cx="2335" cy="370" rx="603.2" ry="660.4" stroke-width="12"/><ellipse cx="2335" cy="370" rx="650.8" ry="712.4" stroke-width="12"/></g></g></g><g mask="url(#m1w)"><g fill="none" stroke="#000" stroke-opacity="0.55" stroke-width="16"><path d="M1957 130L1961.6 144L1965.9 158L1969.5 172L1972.1 186L1973.7 200L1974.1 214L1973.3 228L1971.5 242L1968.8 256L1965.5 270L1962 284L1958.6 298L1955.6 312L1953.3 326L1952.1 340L1952 354L1953 368L1955.3 382L1958.5 396L1962.5 410L1967 424L1971.7 438L1976.1 452L1980 466L1983.1 480L1985.2 494L1986.1 508L1985.8 522L1984.4 536L1982 550L1979 564L1975.5 578L1972 592L1968.8 606L1966.2 620L1964.5 634L1963.9 648L1964.4 662L1966.2 676L1969 690L1972.7 704L1977 718L1981.7 732L1986.2 746L1990.4 760L1993.9 774L1996.4 788L1997.9 802L1998.1 816L1997.1 830L1995.1 844L1992.3 858L1989 872"/><path d="M2013.1 130L2017.6 144L2021.5 158L2024.7 172L2026.8 186L2027.8 200L2027.6 214L2026.2 228L2023.9 242L2020.9 256L2017.4 270L2013.9 284L2010.7 298L2008 312L2006.3 326L2005.6 340L2006.1 354L2007.7 368L2010.5 382L2014.2 396L2018.5 410L2023.1 424L2027.7 438L2031.9 452L2035.4 466L2038 480L2039.5 494L2039.8 508L2038.9 522L2037 536L2034.2 550L2030.9 564L2027.4 578L2024 592L2021.1 606L2018.9 620L2017.7 634L2017.7 648L2018.9 662L2021.2 676L2024.5 690L2028.6 704L2033.1 718L2037.7 732L2042.2 746L2046 760L2049.1 774L2051 788L2051.8 802L2051.4 816L2049.9 830L2047.5 844L2044.4 858L2040.9 872"/><path d="M2069.1 130L2073.4 144L2077 158L2079.6 172L2081.2 186L2081.5 200L2080.7 214L2078.9 228L2076.1 242L2072.9 256L2069.3 270L2065.9 284L2062.9 298L2060.7 312L2059.5 326L2059.4 340L2060.5 354L2062.8 368L2066 382L2070 396L2074.5 410L2079.2 424L2083.6 438L2087.5 452L2090.6 466L2092.7 480L2093.5 494L2093.2 508L2091.8 522L2089.4 536L2086.3 550L2082.9 564L2079.3 578L2076.1 592L2073.6 606L2071.9 620L2071.3 634L2071.9 648L2073.7 662L2076.5 676L2080.2 690L2084.6 704L2089.2 718L2093.8 732L2097.9 746L2101.4 760L2103.9 774L2105.3 788L2105.5 802L2104.5 816L2102.5 830L2099.7 844L2096.4 858L2092.8 872"/><path d="M2125.1 130L2129 144L2132.2 158L2134.3 172L2135.2 186L2135 200L2133.6 214L2131.3 228L2128.2 242L2124.8 256L2121.3 270L2118 284L2115.4 298L2113.7 312L2113 326L2113.5 340L2115.2 354L2118 368L2121.7 382L2126 396L2130.6 410L2135.2 424L2139.4 438L2142.9 452L2145.5 466L2147 480L2147.2 494L2146.3 508L2144.4 522L2141.6 536L2138.3 550L2134.8 564L2131.4 578L2128.4 592L2126.3 606L2125.2 620L2125.2 634L2126.4 648L2128.7 662L2132 676L2136.1 690L2140.6 704L2145.3 718L2149.7 732L2153.5 746L2156.5 760L2158.5 774L2159.3 788L2158.8 802L2157.3 816L2154.9 830L2151.8 844L2148.3 858L2144.8 872"/><path d="M2180.9 130L2184.5 144L2187.1 158L2188.6 172L2189 186L2188.1 200L2186.2 214L2183.5 228L2180.2 242L2176.7 256L2173.3 270L2170.3 284L2168.1 298L2166.9 312L2166.8 326L2168 340L2170.2 354L2173.5 368L2177.6 382L2182.1 396L2186.7 410L2191.2 424L2195 438L2198.1 452L2200.1 466L2201 480L2200.6 494L2199.2 508L2196.8 522L2193.7 536L2190.2 550L2186.7 564L2183.5 578L2180.9 592L2179.3 606L2178.7 620L2179.3 634L2181.1 648L2184 662L2187.8 676L2192.1 690L2196.7 704L2201.3 718L2205.5 732L2208.9 746L2211.4 760L2212.7 774L2212.9 788L2211.9 802L2209.9 816L2207.1 830L2203.7 844L2200.2 858L2196.8 872"/><path d="M2236.5 130L2239.7 144L2241.7 158L2242.7 172L2242.4 186L2241 200L2238.6 214L2235.6 228L2232.1 242L2228.6 256L2225.4 270L2222.8 284L2221.1 298L2220.4 312L2221 326L2222.7 340L2225.5 354L2229.2 368L2233.5 382L2238.2 396L2242.8 410L2246.9 424L2250.4 438L2253 452L2254.4 466L2254.6 480L2253.7 494L2251.7 508L2249 522L2245.6 536L2242.1 550L2238.7 564L2235.8 578L2233.7 592L2232.6 606L2232.6 620L2233.8 634L2236.2 648L2239.5 662L2243.6 676L2248.2 690L2252.8 704L2257.2 718L2261 732L2264 746L2265.9 760L2266.7 774L2266.2 788L2264.7 802L2262.2 816L2259.1 830L2255.6 844L2252.1 858L2249 872"/><path d="M2292 130L2294.6 144L2296.1 158L2296.4 172L2295.5 186L2293.6 200L2290.9 214L2287.6 228L2284 242L2280.6 256L2277.7 270L2275.5 284L2274.3 298L2274.3 312L2275.4 326L2277.7 340L2281 354L2285.1 368L2289.6 382L2294.3 396L2298.7 410L2302.5 424L2305.6 438L2307.6 452L2308.4 466L2308 480L2306.5 494L2304.1 508L2301 522L2297.5 536L2294 550L2290.9 564L2288.3 578L2286.7 592L2286.2 606L2286.8 620L2288.6 634L2291.5 648L2295.3 662L2299.6 676L2304.3 690L2308.8 704L2313 718L2316.4 732L2318.9 746L2320.2 760L2320.3 774L2319.3 788L2317.3 802L2314.4 816L2311.1 830L2307.5 844L2304.2 858L2301.3 872"/><path d="M2347.1 130L2349.2 144L2350.1 158L2349.8 172L2348.4 186L2346 200L2342.9 214L2339.5 228L2336 242L2332.8 256L2330.2 270L2328.5 284L2327.9 298L2328.4 312L2330.2 326L2333 340L2336.7 354L2341.1 368L2345.7 382L2350.3 396L2354.5 410L2357.9 424L2360.5 438L2361.9 452L2362.1 466L2361.1 480L2359.1 494L2356.3 508L2353 522L2349.4 536L2346.1 550L2343.2 564L2341.1 578L2340 592L2340 606L2341.3 620L2343.7 634L2347.1 648L2351.2 662L2355.7 676L2360.3 690L2364.7 704L2368.6 718L2371.5 732L2373.4 746L2374.1 760L2373.7 774L2372.1 788L2369.6 802L2366.4 816L2363 830L2359.5 844L2356.3 858L2353.9 872"/></g><g fill="none" stroke="#fff" stroke-opacity="0.9" stroke-width="8"><path d="M1930 130L1934.6 144L1938.9 158L1942.5 172L1945.1 186L1946.7 200L1947.1 214L1946.3 228L1944.5 242L1941.8 256L1938.5 270L1935 284L1931.6 298L1928.6 312L1926.3 326L1925.1 340L1925 354L1926 368L1928.3 382L1931.5 396L1935.5 410L1940 424L1944.7 438L1949.1 452L1953 466L1956.1 480L1958.2 494L1959.1 508L1958.8 522L1957.4 536L1955 550L1952 564L1948.5 578L1945 592L1941.8 606L1939.2 620L1937.5 634L1936.9 648L1937.4 662L1939.2 676L1942 690L1945.7 704L1950 718L1954.7 732L1959.2 746L1963.4 760L1966.9 774L1969.4 788L1970.9 802L1971.1 816L1970.1 830L1968.1 844L1965.3 858L1962 872"/><path d="M1986.1 130L1990.6 144L1994.5 158L1997.7 172L1999.8 186L2000.8 200L2000.6 214L1999.2 228L1996.9 242L1993.9 256L1990.4 270L1986.9 284L1983.7 298L1981 312L1979.3 326L1978.6 340L1979.1 354L1980.7 368L1983.5 382L1987.2 396L1991.5 410L1996.1 424L2000.7 438L2004.9 452L2008.4 466L2011 480L2012.5 494L2012.8 508L2011.9 522L2010 536L2007.2 550L2003.9 564L2000.4 578L1997 592L1994.1 606L1991.9 620L1990.7 634L1990.7 648L1991.9 662L1994.2 676L1997.5 690L2001.6 704L2006.1 718L2010.7 732L2015.2 746L2019 760L2022.1 774L2024 788L2024.8 802L2024.4 816L2022.9 830L2020.5 844L2017.4 858L2013.9 872"/><path d="M2042.1 130L2046.4 144L2050 158L2052.6 172L2054.2 186L2054.5 200L2053.7 214L2051.9 228L2049.1 242L2045.9 256L2042.3 270L2038.9 284L2035.9 298L2033.7 312L2032.5 326L2032.4 340L2033.5 354L2035.8 368L2039 382L2043 396L2047.5 410L2052.2 424L2056.6 438L2060.5 452L2063.6 466L2065.7 480L2066.5 494L2066.2 508L2064.8 522L2062.4 536L2059.3 550L2055.9 564L2052.3 578L2049.1 592L2046.6 606L2044.9 620L2044.3 634L2044.9 648L2046.7 662L2049.5 676L2053.2 690L2057.6 704L2062.2 718L2066.8 732L2070.9 746L2074.4 760L2076.9 774L2078.3 788L2078.5 802L2077.5 816L2075.5 830L2072.7 844L2069.4 858L2065.8 872"/><path d="M2098.1 130L2102 144L2105.2 158L2107.3 172L2108.2 186L2108 200L2106.6 214L2104.3 228L2101.2 242L2097.8 256L2094.3 270L2091 284L2088.4 298L2086.7 312L2086 326L2086.5 340L2088.2 354L2091 368L2094.7 382L2099 396L2103.6 410L2108.2 424L2112.4 438L2115.9 452L2118.5 466L2120 480L2120.2 494L2119.3 508L2117.4 522L2114.6 536L2111.3 550L2107.8 564L2104.4 578L2101.4 592L2099.3 606L2098.2 620L2098.2 634L2099.4 648L2101.7 662L2105 676L2109.1 690L2113.6 704L2118.3 718L2122.7 732L2126.5 746L2129.5 760L2131.5 774L2132.3 788L2131.8 802L2130.3 816L2127.9 830L2124.8 844L2121.3 858L2117.8 872"/><path d="M2153.9 130L2157.5 144L2160.1 158L2161.6 172L2162 186L2161.1 200L2159.2 214L2156.5 228L2153.2 242L2149.7 256L2146.3 270L2143.3 284L2141.1 298L2139.9 312L2139.8 326L2141 340L2143.2 354L2146.5 368L2150.6 382L2155.1 396L2159.7 410L2164.2 424L2168 438L2171.1 452L2173.1 466L2174 480L2173.6 494L2172.2 508L2169.8 522L2166.7 536L2163.2 550L2159.7 564L2156.5 578L2153.9 592L2152.3 606L2151.7 620L2152.3 634L2154.1 648L2157 662L2160.8 676L2165.1 690L2169.7 704L2174.3 718L2178.5 732L2181.9 746L2184.4 760L2185.7 774L2185.9 788L2184.9 802L2182.9 816L2180.1 830L2176.7 844L2173.2 858L2169.8 872"/><path d="M2209.5 130L2212.7 144L2214.7 158L2215.7 172L2215.4 186L2214 200L2211.6 214L2208.6 228L2205.1 242L2201.6 256L2198.4 270L2195.8 284L2194.1 298L2193.4 312L2194 326L2195.7 340L2198.5 354L2202.2 368L2206.5 382L2211.2 396L2215.8 410L2219.9 424L2223.4 438L2226 452L2227.4 466L2227.6 480L2226.7 494L2224.7 508L2222 522L2218.6 536L2215.1 550L2211.7 564L2208.8 578L2206.7 592L2205.6 606L2205.6 620L2206.8 634L2209.2 648L2212.5 662L2216.6 676L2221.2 690L2225.8 704L2230.2 718L2234 732L2237 746L2238.9 760L2239.7 774L2239.2 788L2237.7 802L2235.2 816L2232.1 830L2228.6 844L2225.1 858L2222 872"/><path d="M2265 130L2267.6 144L2269.1 158L2269.4 172L2268.5 186L2266.6 200L2263.9 214L2260.6 228L2257 242L2253.6 256L2250.7 270L2248.5 284L2247.3 298L2247.3 312L2248.4 326L2250.7 340L2254 354L2258.1 368L2262.6 382L2267.3 396L2271.7 410L2275.5 424L2278.6 438L2280.6 452L2281.4 466L2281 480L2279.5 494L2277.1 508L2274 522L2270.5 536L2267 550L2263.9 564L2261.3 578L2259.7 592L2259.2 606L2259.8 620L2261.6 634L2264.5 648L2268.3 662L2272.6 676L2277.3 690L2281.8 704L2286 718L2289.4 732L2291.9 746L2293.2 760L2293.3 774L2292.3 788L2290.3 802L2287.4 816L2284.1 830L2280.5 844L2277.2 858L2274.3 872"/><path d="M2320.1 130L2322.2 144L2323.1 158L2322.8 172L2321.4 186L2319 200L2315.9 214L2312.5 228L2309 242L2305.8 256L2303.2 270L2301.5 284L2300.9 298L2301.4 312L2303.2 326L2306 340L2309.7 354L2314.1 368L2318.7 382L2323.3 396L2327.5 410L2330.9 424L2333.5 438L2334.9 452L2335.1 466L2334.1 480L2332.1 494L2329.3 508L2326 522L2322.4 536L2319.1 550L2316.2 564L2314.1 578L2313 592L2313 606L2314.3 620L2316.7 634L2320.1 648L2324.2 662L2328.7 676L2333.3 690L2337.7 704L2341.6 718L2344.5 732L2346.4 746L2347.1 760L2346.7 774L2345.1 788L2342.6 802L2339.4 816L2336 830L2332.5 844L2329.3 858L2326.9 872"/></g><g fill="none" stroke="#000" stroke-opacity="0" stroke-width="0"><path d="M1957 130L1953.5 144L1950.4 158L1947.9 172L1946.3 186L1945.9 200L1946.6 214L1948.5 228L1951.5 242L1955.3 256L1959.7 270L1964.3 284L1968.9 298L1973 312L1976.3 326L1978.7 340L1980 354L1980 368L1978.9 382L1976.8 396L1973.9 410L1970.5 424L1967 438L1963.7 452L1960.9 466L1958.9 480L1957.9 494L1958.1 508L1959.6 522L1962.1 536L1965.6 550L1969.8 564L1974.3 578L1979 592L1983.3 606L1987 620L1989.8 634L1991.6 648L1992.1 662L1991.5 676L1989.8 690L1987.2 704L1984 718L1980.5 732L1977 746L1974 760L1971.6 774L1970.2 788L1969.9 802L1970.8 816L1972.9 830L1976 844L1979.9 858L1984.3 872"/><path d="M2008.9 130L2005.6 144L2002.7 158L2000.7 172L1999.7 186L1999.8 200L2001.2 214L2003.6 228L2007.1 242L2011.2 256L2015.8 270L2020.4 284L2024.8 298L2028.5 312L2031.4 326L2033.2 340L2033.8 354L2033.3 368L2031.6 382L2029.1 396L2025.9 410L2022.4 424L2018.9 438L2015.9 452L2013.4 466L2012 480L2011.6 494L2012.4 508L2014.4 522L2017.5 536L2021.4 550L2025.8 564L2030.4 578L2034.9 592L2039 606L2042.3 620L2044.6 634L2045.7 648L2045.7 662L2044.5 676L2042.3 690L2039.3 704L2035.9 718L2032.4 732L2029.1 746L2026.4 760L2024.5 774L2023.6 788L2023.9 802L2025.4 816L2028.1 830L2031.6 844L2035.8 858L2040.4 872"/><path d="M2060.9 130L2057.7 144L2055.3 158L2053.7 172L2053.3 186L2054.1 200L2056 214L2059 228L2062.8 242L2067.2 256L2071.9 270L2076.4 284L2080.5 298L2083.8 312L2086.2 326L2087.4 340L2087.4 354L2086.3 368L2084.2 382L2081.2 396L2077.9 410L2074.3 424L2071 438L2068.2 452L2066.3 466L2065.3 480L2065.6 494L2067 508L2069.6 522L2073.1 536L2077.3 550L2081.9 564L2086.5 578L2090.8 592L2094.5 606L2097.3 620L2099 634L2099.6 648L2098.9 662L2097.2 676L2094.6 690L2091.3 704L2087.8 718L2084.4 732L2081.3 746L2079 760L2077.6 774L2077.3 788L2078.3 802L2080.4 816L2083.5 830L2087.4 844L2091.9 858L2096.5 872"/><path d="M2112.9 130L2110.1 144L2108.1 158L2107.1 172L2107.3 186L2108.6 200L2111.1 214L2114.6 228L2118.7 242L2123.3 256L2127.9 270L2132.3 284L2136 298L2138.9 312L2140.7 326L2141.3 340L2140.7 354L2139 368L2136.5 382L2133.3 396L2129.8 410L2126.3 424L2123.2 438L2120.8 452L2119.4 466L2119 480L2119.9 494L2121.9 508L2125 522L2128.9 536L2133.3 550L2138 564L2142.5 578L2146.5 592L2149.8 606L2152 620L2153.2 634L2153.1 648L2151.9 662L2149.7 676L2146.7 690L2143.3 704L2139.8 718L2136.5 732L2133.7 746L2131.9 760L2131 774L2131.4 788L2132.9 802L2135.6 816L2139.1 830L2143.4 844L2148 858L2152.6 872"/><path d="M2165.1 130L2162.7 144L2161.1 158L2160.7 172L2161.5 186L2163.5 200L2166.5 214L2170.3 228L2174.8 242L2179.4 256L2183.9 270L2188 284L2191.3 298L2193.7 312L2194.8 326L2194.8 340L2193.7 354L2191.5 368L2188.6 382L2185.2 396L2181.7 410L2178.4 424L2175.6 438L2173.7 452L2172.8 466L2173 480L2174.5 494L2177.1 508L2180.6 522L2184.8 536L2189.4 550L2194 564L2198.3 578L2202 592L2204.8 606L2206.5 620L2207 634L2206.3 648L2204.6 662L2201.9 676L2198.7 690L2195.2 704L2191.7 718L2188.7 732L2186.4 746L2185 760L2184.8 774L2185.7 788L2187.9 802L2191 816L2194.9 830L2199.4 844L2204.1 858L2208.5 872"/><path d="M2217.5 130L2215.5 144L2214.5 158L2214.7 172L2216.1 186L2218.6 200L2222.1 214L2226.3 228L2230.8 242L2235.5 256L2239.8 270L2243.5 284L2246.4 298L2248.1 312L2248.7 326L2248.1 340L2246.4 354L2243.8 368L2240.6 382L2237.1 396L2233.6 410L2230.6 424L2228.2 438L2226.8 452L2226.5 466L2227.4 480L2229.4 494L2232.5 508L2236.4 522L2240.9 536L2245.5 550L2250 564L2254 578L2257.3 592L2259.5 606L2260.6 620L2260.5 634L2259.2 648L2257 662L2254 676L2250.6 690L2247.1 704L2243.8 718L2241.1 732L2239.3 746L2238.5 760L2238.8 774L2240.4 788L2243.1 802L2246.6 816L2250.9 830L2255.5 844L2260.1 858L2264.4 872"/><path d="M2270 130L2268.5 144L2268.2 158L2269 172L2271 186L2274 200L2277.9 214L2282.3 228L2286.9 242L2291.5 256L2295.5 270L2298.8 284L2301.1 298L2302.3 312L2302.2 326L2301.1 340L2298.9 354L2296 368L2292.6 382L2289 396L2285.7 410L2283 424L2281.1 438L2280.2 452L2280.5 466L2282 480L2284.6 494L2288.1 508L2292.3 522L2296.9 536L2301.6 550L2305.9 564L2309.5 578L2312.3 592L2313.9 606L2314.4 620L2313.7 634L2311.9 648L2309.3 662L2306 676L2302.5 690L2299.1 704L2296.1 718L2293.8 732L2292.4 746L2292.2 760L2293.2 774L2295.3 788L2298.5 802L2302.5 816L2306.9 830L2311.6 844L2316.1 858L2320 872"/><path d="M2322.9 130L2321.9 144L2322.2 158L2323.6 172L2326.1 186L2329.6 200L2333.8 214L2338.4 228L2343 242L2347.3 256L2351 270L2353.8 284L2355.6 298L2356.1 312L2355.5 326L2353.8 340L2351.2 354L2348 368L2344.5 382L2341 396L2337.9 410L2335.6 424L2334.2 438L2333.9 452L2334.8 466L2336.9 480L2340 494L2343.9 508L2348.4 522L2353 536L2357.5 550L2361.5 564L2364.8 578L2367 592L2368 606L2367.9 620L2366.6 634L2364.4 648L2361.4 662L2358 676L2354.5 690L2351.2 704L2348.5 718L2346.7 732L2345.9 746L2346.3 760L2347.9 774L2350.6 788L2354.2 802L2358.4 816L2363 830L2367.6 844L2371.9 858L2375.5 872"/></g><g fill="none" stroke="#fff" stroke-opacity="0.9" stroke-width="7"><path d="M1930 130L1926.5 144L1923.4 158L1920.9 172L1919.3 186L1918.9 200L1919.6 214L1921.5 228L1924.5 242L1928.3 256L1932.7 270L1937.3 284L1941.9 298L1946 312L1949.3 326L1951.7 340L1953 354L1953 368L1951.9 382L1949.8 396L1946.9 410L1943.5 424L1940 438L1936.7 452L1933.9 466L1931.9 480L1930.9 494L1931.1 508L1932.6 522L1935.1 536L1938.6 550L1942.8 564L1947.3 578L1952 592L1956.3 606L1960 620L1962.8 634L1964.6 648L1965.1 662L1964.5 676L1962.8 690L1960.2 704L1957 718L1953.5 732L1950 746L1947 760L1944.6 774L1943.2 788L1942.9 802L1943.8 816L1945.9 830L1949 844L1952.9 858L1957.3 872"/><path d="M1981.9 130L1978.6 144L1975.7 158L1973.7 172L1972.7 186L1972.8 200L1974.2 214L1976.6 228L1980.1 242L1984.2 256L1988.8 270L1993.4 284L1997.8 298L2001.5 312L2004.4 326L2006.2 340L2006.8 354L2006.3 368L2004.6 382L2002.1 396L1998.9 410L1995.4 424L1991.9 438L1988.9 452L1986.4 466L1985 480L1984.6 494L1985.4 508L1987.4 522L1990.5 536L1994.4 550L1998.8 564L2003.4 578L2007.9 592L2012 606L2015.3 620L2017.6 634L2018.7 648L2018.7 662L2017.5 676L2015.3 690L2012.3 704L2008.9 718L2005.4 732L2002.1 746L1999.4 760L1997.5 774L1996.6 788L1996.9 802L1998.4 816L2001.1 830L2004.6 844L2008.8 858L2013.4 872"/><path d="M2033.9 130L2030.7 144L2028.3 158L2026.7 172L2026.3 186L2027.1 200L2029 214L2032 228L2035.8 242L2040.2 256L2044.9 270L2049.4 284L2053.5 298L2056.8 312L2059.2 326L2060.4 340L2060.4 354L2059.3 368L2057.2 382L2054.2 396L2050.9 410L2047.3 424L2044 438L2041.2 452L2039.3 466L2038.3 480L2038.6 494L2040 508L2042.6 522L2046.1 536L2050.3 550L2054.9 564L2059.5 578L2063.8 592L2067.5 606L2070.3 620L2072 634L2072.6 648L2071.9 662L2070.2 676L2067.6 690L2064.3 704L2060.8 718L2057.4 732L2054.3 746L2052 760L2050.6 774L2050.3 788L2051.3 802L2053.4 816L2056.5 830L2060.4 844L2064.9 858L2069.5 872"/><path d="M2085.9 130L2083.1 144L2081.1 158L2080.1 172L2080.3 186L2081.6 200L2084.1 214L2087.6 228L2091.7 242L2096.3 256L2100.9 270L2105.3 284L2109 298L2111.9 312L2113.7 326L2114.3 340L2113.7 354L2112 368L2109.5 382L2106.3 396L2102.8 410L2099.3 424L2096.2 438L2093.8 452L2092.4 466L2092 480L2092.9 494L2094.9 508L2098 522L2101.9 536L2106.3 550L2111 564L2115.5 578L2119.5 592L2122.8 606L2125 620L2126.2 634L2126.1 648L2124.9 662L2122.7 676L2119.7 690L2116.3 704L2112.8 718L2109.5 732L2106.7 746L2104.9 760L2104 774L2104.4 788L2105.9 802L2108.6 816L2112.1 830L2116.4 844L2121 858L2125.6 872"/><path d="M2138.1 130L2135.7 144L2134.1 158L2133.7 172L2134.5 186L2136.5 200L2139.5 214L2143.3 228L2147.8 242L2152.4 256L2156.9 270L2161 284L2164.3 298L2166.7 312L2167.8 326L2167.8 340L2166.7 354L2164.5 368L2161.6 382L2158.2 396L2154.7 410L2151.4 424L2148.6 438L2146.7 452L2145.8 466L2146 480L2147.5 494L2150.1 508L2153.6 522L2157.8 536L2162.4 550L2167 564L2171.3 578L2175 592L2177.8 606L2179.5 620L2180 634L2179.3 648L2177.6 662L2174.9 676L2171.7 690L2168.2 704L2164.7 718L2161.7 732L2159.4 746L2158 760L2157.8 774L2158.7 788L2160.9 802L2164 816L2167.9 830L2172.4 844L2177.1 858L2181.5 872"/><path d="M2190.5 130L2188.5 144L2187.5 158L2187.7 172L2189.1 186L2191.6 200L2195.1 214L2199.3 228L2203.8 242L2208.5 256L2212.8 270L2216.5 284L2219.4 298L2221.1 312L2221.7 326L2221.1 340L2219.4 354L2216.8 368L2213.6 382L2210.1 396L2206.6 410L2203.6 424L2201.2 438L2199.8 452L2199.5 466L2200.4 480L2202.4 494L2205.5 508L2209.4 522L2213.9 536L2218.5 550L2223 564L2227 578L2230.3 592L2232.5 606L2233.6 620L2233.5 634L2232.2 648L2230 662L2227 676L2223.6 690L2220.1 704L2216.8 718L2214.1 732L2212.3 746L2211.5 760L2211.8 774L2213.4 788L2216.1 802L2219.6 816L2223.9 830L2228.5 844L2233.1 858L2237.4 872"/><path d="M2243 130L2241.5 144L2241.2 158L2242 172L2244 186L2247 200L2250.9 214L2255.3 228L2259.9 242L2264.5 256L2268.5 270L2271.8 284L2274.1 298L2275.3 312L2275.2 326L2274.1 340L2271.9 354L2269 368L2265.6 382L2262 396L2258.7 410L2256 424L2254.1 438L2253.2 452L2253.5 466L2255 480L2257.6 494L2261.1 508L2265.3 522L2269.9 536L2274.6 550L2278.9 564L2282.5 578L2285.3 592L2286.9 606L2287.4 620L2286.7 634L2284.9 648L2282.3 662L2279 676L2275.5 690L2272.1 704L2269.1 718L2266.8 732L2265.4 746L2265.2 760L2266.2 774L2268.3 788L2271.5 802L2275.5 816L2279.9 830L2284.6 844L2289.1 858L2293 872"/><path d="M2295.9 130L2294.9 144L2295.2 158L2296.6 172L2299.1 186L2302.6 200L2306.8 214L2311.4 228L2316 242L2320.3 256L2324 270L2326.8 284L2328.6 298L2329.1 312L2328.5 326L2326.8 340L2324.2 354L2321 368L2317.5 382L2314 396L2310.9 410L2308.6 424L2307.2 438L2306.9 452L2307.8 466L2309.9 480L2313 494L2316.9 508L2321.4 522L2326 536L2330.5 550L2334.5 564L2337.8 578L2340 592L2341 606L2340.9 620L2339.6 634L2337.4 648L2334.4 662L2331 676L2327.5 690L2324.2 704L2321.5 718L2319.7 732L2318.9 746L2319.3 760L2320.9 774L2323.6 788L2327.2 802L2331.4 816L2336 830L2340.6 844L2344.9 858L2348.5 872"/></g></g></g></mask>
<mask id="mk2" maskUnits="userSpaceOnUse" x="1850" y="740" width="680" height="540" style="mask-type:luminance"><g filter="url(#j2)"><rect x="1850" y="740" width="680" height="540" fill="#000" /><rect x="1850" y="740" width="680" height="540" fill="url(#g2b)" /><g mask="url(#m2h)"><rect x="1850" y="740" width="680" height="540" fill="url(#hz)" fill-opacity=".55"/></g><g mask="url(#m2r)"><g fill="none" stroke="#000" stroke-opacity="0.4"><ellipse cx="2061" cy="1195" rx="57" ry="57" stroke-width="12"/><ellipse cx="2061" cy="1195" rx="107" ry="107" stroke-width="12"/><ellipse cx="2061" cy="1195" rx="157" ry="157" stroke-width="12"/><ellipse cx="2061" cy="1195" rx="207" ry="207" stroke-width="12"/><ellipse cx="2061" cy="1195" rx="257" ry="257" stroke-width="12"/><ellipse cx="2061" cy="1195" rx="307" ry="307" stroke-width="12"/><ellipse cx="2061" cy="1195" rx="357" ry="357" stroke-width="12"/><ellipse cx="2061" cy="1195" rx="407" ry="407" stroke-width="12"/><ellipse cx="2061" cy="1195" rx="457" ry="457" stroke-width="12"/><ellipse cx="2061" cy="1195" rx="507" ry="507" stroke-width="12"/><ellipse cx="2061" cy="1195" rx="557" ry="557" stroke-width="12"/></g><g fill="none" stroke="#fff" stroke-opacity="1"><ellipse cx="2061" cy="1195" rx="45" ry="45" stroke-width="9"/><ellipse cx="2061" cy="1195" rx="95" ry="95" stroke-width="9"/><ellipse cx="2061" cy="1195" rx="145" ry="145" stroke-width="9"/><ellipse cx="2061" cy="1195" rx="195" ry="195" stroke-width="9"/><ellipse cx="2061" cy="1195" rx="245" ry="245" stroke-width="9"/><ellipse cx="2061" cy="1195" rx="295" ry="295" stroke-width="9"/><ellipse cx="2061" cy="1195" rx="345" ry="345" stroke-width="9"/><ellipse cx="2061" cy="1195" rx="395" ry="395" stroke-width="9"/><ellipse cx="2061" cy="1195" rx="445" ry="445" stroke-width="9"/><ellipse cx="2061" cy="1195" rx="495" ry="495" stroke-width="9"/><ellipse cx="2061" cy="1195" rx="545" ry="545" stroke-width="9"/></g></g><g mask="url(#m2w)"><g fill="none" stroke="#000" stroke-opacity="0.55" stroke-width="9"><path d="M2131 760L2133.4 774L2135.1 788L2135.5 802L2134.4 816L2132.1 830L2129.2 844L2126.6 858L2124.9 872L2124.6 886L2125.8 900L2128 914L2130.5 928L2132.6 942L2133.6 956L2133.1 970L2131.3 984L2128.5 998L2125.7 1012L2123.5 1026L2122.6 1040L2123.2 1054L2125 1068L2127.5 1082L2129.9 1096L2131.4 1110L2131.6 1124L2130.3 1138L2127.8 1152L2125 1166L2122.4 1180L2120.9 1194L2120.9 1208L2122.2 1222L2124.5 1236L2127 1250L2129 1264L2129.8 1278"/><path d="M2155.4 760L2157.2 774L2157.7 788L2156.7 802L2154.5 816L2151.6 830L2148.9 844L2147.2 858L2146.7 872L2147.8 886L2149.9 900L2152.5 914L2154.6 928L2155.7 942L2155.4 956L2153.6 970L2151 984L2148.1 998L2145.8 1012L2144.8 1026L2145.3 1040L2147 1054L2149.4 1068L2151.9 1082L2153.5 1096L2153.8 1110L2152.6 1124L2150.2 1138L2147.4 1152L2144.8 1166L2143.2 1180L2143 1194L2144.2 1208L2146.4 1222L2149 1236L2151 1250L2151.9 1264L2151.3 1278"/><path d="M2179.2 760L2179.8 774L2179 788L2176.9 802L2174 816L2171.3 830L2169.4 844L2168.9 858L2169.8 872L2171.8 886L2174.4 900L2176.6 914L2177.8 928L2177.6 942L2176 956L2173.4 970L2170.5 984L2168.2 998L2167 1012L2167.3 1026L2168.9 1040L2171.4 1054L2173.8 1068L2175.5 1082L2176 1096L2174.9 1110L2172.6 1124L2169.8 1138L2167.1 1152L2165.4 1166L2165.1 1180L2166.2 1194L2168.4 1208L2170.9 1222L2173 1236L2174 1250L2173.6 1264L2171.8 1278"/><path d="M2202 760L2201.3 774L2199.2 788L2196.5 802L2193.7 816L2191.7 830L2191 844L2191.8 858L2193.8 872L2196.3 886L2198.6 900L2199.9 914L2199.8 928L2198.3 942L2195.8 956L2192.9 970L2190.5 984L2189.2 998L2189.4 1012L2190.9 1026L2193.3 1040L2195.8 1054L2197.6 1068L2198.1 1082L2197.2 1096L2195 1110L2192.2 1124L2189.5 1138L2187.7 1152L2187.2 1166L2188.2 1180L2190.3 1194L2192.8 1208L2195 1222L2196.2 1236L2195.9 1250L2194.2 1264L2191.5 1278"/><path d="M2223.5 760L2221.6 774L2218.9 788L2216.1 802L2214 816L2213.2 830L2213.8 844L2215.7 858L2218.2 872L2220.6 886L2222 900L2222.1 914L2220.7 928L2218.2 942L2215.3 956L2212.8 970L2211.4 984L2211.4 998L2212.9 1012L2215.2 1026L2217.7 1040L2219.6 1054L2220.3 1068L2219.5 1082L2217.4 1096L2214.6 1110L2211.9 1124L2209.9 1138L2209.3 1152L2210.2 1166L2212.2 1180L2214.8 1194L2217 1208L2218.3 1222L2218.1 1236L2216.5 1250L2213.9 1264L2211.1 1278"/><path d="M2244 760L2241.3 774L2238.5 788L2236.3 802L2235.3 816L2235.9 830L2237.7 844L2240.2 858L2242.5 872L2244.1 886L2244.3 900L2243 914L2240.6 928L2237.7 942L2235.2 956L2233.6 970L2233.5 984L2234.8 998L2237.1 1012L2239.7 1026L2241.6 1040L2242.5 1054L2241.8 1068L2239.8 1082L2237 1096L2234.2 1110L2232.2 1124L2231.5 1138L2232.2 1152L2234.2 1166L2236.7 1180L2239 1194L2240.4 1208L2240.3 1222L2238.9 1236L2236.4 1250L2233.5 1264L2231 1278"/><path d="M2263.7 760L2260.8 774L2258.6 788L2257.5 802L2257.9 816L2259.6 830L2262.1 844L2264.5 858L2266.1 872L2266.5 886L2265.3 900L2263 914L2260.1 928L2257.5 942L2255.9 956L2255.6 970L2256.8 984L2259.1 998L2261.6 1012L2263.7 1026L2264.6 1040L2264.1 1054L2262.2 1068L2259.5 1082L2256.6 1096L2254.5 1110L2253.6 1124L2254.2 1138L2256.1 1152L2258.6 1166L2261 1180L2262.4 1194L2262.5 1208L2261.2 1222L2258.8 1236L2255.9 1250L2253.4 1264L2251.9 1278"/><path d="M2283.2 760L2280.9 774L2279.7 788L2280 802L2281.6 816L2284 830L2286.5 844L2288.2 858L2288.7 872L2287.6 886L2285.4 900L2282.5 914L2279.9 928L2278.1 942L2277.7 956L2278.8 970L2281 984L2283.5 998L2285.7 1012L2286.7 1026L2286.3 1040L2284.5 1054L2281.9 1068L2279 1082L2276.8 1096L2275.8 1110L2276.3 1124L2278 1138L2280.5 1152L2282.9 1166L2284.5 1180L2284.8 1194L2283.5 1208L2281.2 1222L2278.3 1236L2275.7 1250L2274.1 1264L2274 1278"/><path d="M2303.2 760L2301.9 774L2302 788L2303.5 802L2305.9 816L2308.4 830L2310.2 844L2310.8 858L2309.9 872L2307.8 886L2305 900L2302.2 914L2300.4 928L2299.9 942L2300.8 956L2302.9 970L2305.5 984L2307.7 998L2308.8 1012L2308.6 1026L2306.9 1040L2304.3 1054L2301.4 1068L2299.1 1082L2298 1096L2298.3 1110L2300 1124L2302.4 1138L2304.9 1152L2306.6 1166L2306.9 1180L2305.9 1194L2303.6 1208L2300.7 1222L2298.1 1236L2296.4 1250L2296.1 1264L2297.2 1278"/><path d="M2324.1 760L2324.1 774L2325.5 788L2327.8 802L2330.3 816L2332.3 830L2333 844L2332.2 858L2330.2 872L2327.4 886L2324.6 900L2322.6 914L2322 928L2322.8 942L2324.8 956L2327.4 970L2329.6 984L2330.9 998L2330.8 1012L2329.3 1026L2326.7 1040L2323.8 1054L2321.4 1068L2320.2 1082L2320.4 1096L2322 1110L2324.4 1124L2326.8 1138L2328.6 1152L2329.1 1166L2328.2 1180L2326 1194L2323.1 1208L2320.4 1222L2318.6 1236L2318.2 1250L2319.2 1264L2321.3 1278"/><path d="M2346.2 760L2347.5 774L2349.8 788L2352.3 802L2354.3 816L2355.1 830L2354.5 844L2352.5 858L2349.8 872L2347 886L2344.9 900L2344.2 914L2344.9 928L2346.8 942L2349.3 956L2351.6 970L2353 984L2353 998L2351.6 1012L2349.1 1026L2346.2 1040L2343.8 1054L2342.4 1068L2342.5 1082L2343.9 1096L2346.3 1110L2348.8 1124L2350.7 1138L2351.3 1152L2350.5 1166L2348.3 1180L2345.5 1194L2342.8 1208L2340.9 1222L2340.3 1236L2341.2 1250L2343.3 1264L2345.8 1278"/><path d="M2369.5 760L2371.7 774L2374.2 788L2376.3 802L2377.3 816L2376.8 830L2374.9 844L2372.2 858L2369.4 872L2367.2 886L2366.3 900L2366.9 914L2368.7 928L2371.2 942L2373.6 956L2375.1 970L2375.2 984L2373.9 998L2371.5 1012L2368.6 1026L2366.1 1040L2364.6 1054L2364.6 1068L2365.9 1082L2368.2 1096L2370.7 1110L2372.7 1124L2373.4 1138L2372.7 1152L2370.7 1166L2367.9 1180L2365.2 1194L2363.2 1208L2362.5 1222L2363.2 1236L2365.2 1250L2367.7 1264L2370 1278"/><path d="M2393.6 760L2396.1 774L2398.3 788L2399.4 802L2399 816L2397.3 830L2394.6 844L2391.8 858L2389.5 872L2388.5 886L2388.9 900L2390.7 914L2393.1 928L2395.6 942L2397.2 956L2397.5 970L2396.3 984L2393.9 998L2391 1012L2388.4 1026L2386.8 1040L2386.6 1054L2387.9 1068L2390.1 1082L2392.7 1096L2394.7 1110L2395.6 1124L2395 1138L2393.1 1152L2390.4 1166L2387.6 1180L2385.4 1194L2384.6 1208L2385.3 1222L2387.2 1236L2389.7 1250L2392 1264L2393.5 1278"/><path d="M2418.1 760L2420.3 774L2421.5 788L2421.3 802L2419.6 816L2417 830L2414.2 844L2411.8 858L2410.7 872L2411 886L2412.6 900L2415.1 914L2417.5 928L2419.2 942L2419.6 956L2418.6 970L2416.3 984L2413.5 998L2410.8 1012L2409.1 1026L2408.8 1040L2409.9 1054L2412 1068L2414.6 1082L2416.7 1096L2417.7 1110L2417.3 1124L2415.5 1138L2412.8 1152L2409.9 1166L2407.7 1180L2406.8 1194L2407.3 1208L2409.1 1222L2411.6 1236L2414 1250L2415.5 1264L2415.7 1278"/><path d="M2442.3 760L2443.6 774L2443.5 788L2442 802L2439.4 816L2436.6 830L2434.2 844L2432.9 858L2433.1 872L2434.6 886L2437 900L2439.5 914L2441.3 928L2441.8 942L2440.9 956L2438.7 970L2435.9 984L2433.2 998L2431.3 1012L2430.9 1026L2431.9 1040L2434 1054L2436.5 1068L2438.7 1082L2439.8 1096L2439.5 1110L2437.8 1124L2435.2 1138L2432.3 1152L2430.1 1166L2429 1180L2429.4 1194L2431.1 1208L2433.5 1222L2435.9 1236L2437.6 1250L2437.9 1264L2436.8 1278"/><path d="M2465.7 760L2465.7 774L2464.3 788L2461.9 802L2459 816L2456.5 830L2455.1 844L2455.1 858L2456.6 872L2458.9 886L2461.4 900L2463.3 914L2464 928L2463.2 942L2461.1 956L2458.3 970L2455.5 984L2453.6 998L2453 1012L2453.9 1026L2455.9 1040L2458.4 1054L2460.7 1068L2461.9 1082L2461.8 1096L2460.2 1110L2457.6 1124L2454.7 1138L2452.4 1152L2451.2 1166L2451.4 1180L2453 1194L2455.4 1208L2457.9 1222L2459.6 1236L2460.1 1250L2459.1 1264L2456.9 1278"/><path d="M2487.9 760L2486.7 774L2484.3 788L2481.4 802L2478.8 816L2477.3 830L2477.2 844L2478.5 858L2480.8 872L2483.4 886L2485.3 900L2486.1 914L2485.5 928L2483.5 942L2480.7 956L2477.9 970L2475.9 984L2475.2 998L2475.9 1012L2477.8 1026L2480.4 1040L2482.7 1054L2484 1068L2484 1082L2482.5 1096L2480 1110L2477.1 1124L2474.7 1138L2473.4 1152L2473.5 1166L2475 1180L2477.3 1194L2479.8 1208L2481.7 1222L2482.3 1236L2481.4 1250L2479.3 1264L2476.4 1278"/><path d="M2509 760L2506.7 774L2503.8 788L2501.2 802L2499.5 816L2499.3 830L2500.5 844L2502.7 858L2505.3 872L2507.3 886L2508.3 900L2507.7 914L2505.9 928L2503.1 942L2500.3 956L2498.2 970L2497.3 984L2497.9 998L2499.8 1012L2502.3 1026L2504.7 1040L2506.1 1054L2506.2 1068L2504.9 1082L2502.4 1096L2499.5 1110L2497 1124L2495.6 1138L2495.6 1152L2496.9 1166L2499.3 1180L2501.8 1194L2503.7 1208L2504.4 1222L2503.7 1236L2501.7 1250L2498.9 1264L2496.1 1278"/></g><g fill="none" stroke="#fff" stroke-opacity="0.9" stroke-width="8"><path d="M2120 760L2122.4 774L2124.1 788L2124.5 802L2123.4 816L2121.1 830L2118.2 844L2115.6 858L2113.9 872L2113.6 886L2114.8 900L2117 914L2119.5 928L2121.6 942L2122.6 956L2122.1 970L2120.3 984L2117.5 998L2114.7 1012L2112.5 1026L2111.6 1040L2112.2 1054L2114 1068L2116.5 1082L2118.9 1096L2120.4 1110L2120.6 1124L2119.3 1138L2116.8 1152L2114 1166L2111.4 1180L2109.9 1194L2109.9 1208L2111.2 1222L2113.5 1236L2116 1250L2118 1264L2118.8 1278"/><path d="M2144.4 760L2146.2 774L2146.7 788L2145.7 802L2143.5 816L2140.6 830L2137.9 844L2136.2 858L2135.7 872L2136.8 886L2138.9 900L2141.5 914L2143.6 928L2144.7 942L2144.4 956L2142.6 970L2140 984L2137.1 998L2134.8 1012L2133.8 1026L2134.3 1040L2136 1054L2138.4 1068L2140.9 1082L2142.5 1096L2142.8 1110L2141.6 1124L2139.2 1138L2136.4 1152L2133.8 1166L2132.2 1180L2132 1194L2133.2 1208L2135.4 1222L2138 1236L2140 1250L2140.9 1264L2140.3 1278"/><path d="M2168.2 760L2168.8 774L2168 788L2165.9 802L2163 816L2160.3 830L2158.4 844L2157.9 858L2158.8 872L2160.8 886L2163.4 900L2165.6 914L2166.8 928L2166.6 942L2165 956L2162.4 970L2159.5 984L2157.2 998L2156 1012L2156.3 1026L2157.9 1040L2160.4 1054L2162.8 1068L2164.5 1082L2165 1096L2163.9 1110L2161.6 1124L2158.8 1138L2156.1 1152L2154.4 1166L2154.1 1180L2155.2 1194L2157.4 1208L2159.9 1222L2162 1236L2163 1250L2162.6 1264L2160.8 1278"/><path d="M2191 760L2190.3 774L2188.2 788L2185.5 802L2182.7 816L2180.7 830L2180 844L2180.8 858L2182.8 872L2185.3 886L2187.6 900L2188.9 914L2188.8 928L2187.3 942L2184.8 956L2181.9 970L2179.5 984L2178.2 998L2178.4 1012L2179.9 1026L2182.3 1040L2184.8 1054L2186.6 1068L2187.1 1082L2186.2 1096L2184 1110L2181.2 1124L2178.5 1138L2176.7 1152L2176.2 1166L2177.2 1180L2179.3 1194L2181.8 1208L2184 1222L2185.2 1236L2184.9 1250L2183.2 1264L2180.5 1278"/><path d="M2212.5 760L2210.6 774L2207.9 788L2205.1 802L2203 816L2202.2 830L2202.8 844L2204.7 858L2207.2 872L2209.6 886L2211 900L2211.1 914L2209.7 928L2207.2 942L2204.3 956L2201.8 970L2200.4 984L2200.4 998L2201.9 1012L2204.2 1026L2206.7 1040L2208.6 1054L2209.3 1068L2208.5 1082L2206.4 1096L2203.6 1110L2200.9 1124L2198.9 1138L2198.3 1152L2199.2 1166L2201.2 1180L2203.8 1194L2206 1208L2207.3 1222L2207.1 1236L2205.5 1250L2202.9 1264L2200.1 1278"/><path d="M2233 760L2230.3 774L2227.5 788L2225.3 802L2224.3 816L2224.9 830L2226.7 844L2229.2 858L2231.5 872L2233.1 886L2233.3 900L2232 914L2229.6 928L2226.7 942L2224.2 956L2222.6 970L2222.5 984L2223.8 998L2226.1 1012L2228.7 1026L2230.6 1040L2231.5 1054L2230.8 1068L2228.8 1082L2226 1096L2223.2 1110L2221.2 1124L2220.5 1138L2221.2 1152L2223.2 1166L2225.7 1180L2228 1194L2229.4 1208L2229.3 1222L2227.9 1236L2225.4 1250L2222.5 1264L2220 1278"/><path d="M2252.7 760L2249.8 774L2247.6 788L2246.5 802L2246.9 816L2248.6 830L2251.1 844L2253.5 858L2255.1 872L2255.5 886L2254.3 900L2252 914L2249.1 928L2246.5 942L2244.9 956L2244.6 970L2245.8 984L2248.1 998L2250.6 1012L2252.7 1026L2253.6 1040L2253.1 1054L2251.2 1068L2248.5 1082L2245.6 1096L2243.5 1110L2242.6 1124L2243.2 1138L2245.1 1152L2247.6 1166L2250 1180L2251.4 1194L2251.5 1208L2250.2 1222L2247.8 1236L2244.9 1250L2242.4 1264L2240.9 1278"/><path d="M2272.2 760L2269.9 774L2268.7 788L2269 802L2270.6 816L2273 830L2275.5 844L2277.2 858L2277.7 872L2276.6 886L2274.4 900L2271.5 914L2268.9 928L2267.1 942L2266.7 956L2267.8 970L2270 984L2272.5 998L2274.7 1012L2275.7 1026L2275.3 1040L2273.5 1054L2270.9 1068L2268 1082L2265.8 1096L2264.8 1110L2265.3 1124L2267 1138L2269.5 1152L2271.9 1166L2273.5 1180L2273.8 1194L2272.5 1208L2270.2 1222L2267.3 1236L2264.7 1250L2263.1 1264L2263 1278"/><path d="M2292.2 760L2290.9 774L2291 788L2292.5 802L2294.9 816L2297.4 830L2299.2 844L2299.8 858L2298.9 872L2296.8 886L2294 900L2291.2 914L2289.4 928L2288.9 942L2289.8 956L2291.9 970L2294.5 984L2296.7 998L2297.8 1012L2297.6 1026L2295.9 1040L2293.3 1054L2290.4 1068L2288.1 1082L2287 1096L2287.3 1110L2289 1124L2291.4 1138L2293.9 1152L2295.6 1166L2295.9 1180L2294.9 1194L2292.6 1208L2289.7 1222L2287.1 1236L2285.4 1250L2285.1 1264L2286.2 1278"/><path d="M2313.1 760L2313.1 774L2314.5 788L2316.8 802L2319.3 816L2321.3 830L2322 844L2321.2 858L2319.2 872L2316.4 886L2313.6 900L2311.6 914L2311 928L2311.8 942L2313.8 956L2316.4 970L2318.6 984L2319.9 998L2319.8 1012L2318.3 1026L2315.7 1040L2312.8 1054L2310.4 1068L2309.2 1082L2309.4 1096L2311 1110L2313.4 1124L2315.8 1138L2317.6 1152L2318.1 1166L2317.2 1180L2315 1194L2312.1 1208L2309.4 1222L2307.6 1236L2307.2 1250L2308.2 1264L2310.3 1278"/><path d="M2335.2 760L2336.5 774L2338.8 788L2341.3 802L2343.3 816L2344.1 830L2343.5 844L2341.5 858L2338.8 872L2336 886L2333.9 900L2333.2 914L2333.9 928L2335.8 942L2338.3 956L2340.6 970L2342 984L2342 998L2340.6 1012L2338.1 1026L2335.2 1040L2332.8 1054L2331.4 1068L2331.5 1082L2332.9 1096L2335.3 1110L2337.8 1124L2339.7 1138L2340.3 1152L2339.5 1166L2337.3 1180L2334.5 1194L2331.8 1208L2329.9 1222L2329.3 1236L2330.2 1250L2332.3 1264L2334.8 1278"/><path d="M2358.5 760L2360.7 774L2363.2 788L2365.3 802L2366.3 816L2365.8 830L2363.9 844L2361.2 858L2358.4 872L2356.2 886L2355.3 900L2355.9 914L2357.7 928L2360.2 942L2362.6 956L2364.1 970L2364.2 984L2362.9 998L2360.5 1012L2357.6 1026L2355.1 1040L2353.6 1054L2353.6 1068L2354.9 1082L2357.2 1096L2359.7 1110L2361.7 1124L2362.4 1138L2361.7 1152L2359.7 1166L2356.9 1180L2354.2 1194L2352.2 1208L2351.5 1222L2352.2 1236L2354.2 1250L2356.7 1264L2359 1278"/><path d="M2382.6 760L2385.1 774L2387.3 788L2388.4 802L2388 816L2386.3 830L2383.6 844L2380.8 858L2378.5 872L2377.5 886L2377.9 900L2379.7 914L2382.1 928L2384.6 942L2386.2 956L2386.5 970L2385.3 984L2382.9 998L2380 1012L2377.4 1026L2375.8 1040L2375.6 1054L2376.9 1068L2379.1 1082L2381.7 1096L2383.7 1110L2384.6 1124L2384 1138L2382.1 1152L2379.4 1166L2376.6 1180L2374.4 1194L2373.6 1208L2374.3 1222L2376.2 1236L2378.7 1250L2381 1264L2382.5 1278"/><path d="M2407.1 760L2409.3 774L2410.5 788L2410.3 802L2408.6 816L2406 830L2403.2 844L2400.8 858L2399.7 872L2400 886L2401.6 900L2404.1 914L2406.5 928L2408.2 942L2408.6 956L2407.6 970L2405.3 984L2402.5 998L2399.8 1012L2398.1 1026L2397.8 1040L2398.9 1054L2401 1068L2403.6 1082L2405.7 1096L2406.7 1110L2406.3 1124L2404.5 1138L2401.8 1152L2398.9 1166L2396.7 1180L2395.8 1194L2396.3 1208L2398.1 1222L2400.6 1236L2403 1250L2404.5 1264L2404.7 1278"/><path d="M2431.3 760L2432.6 774L2432.5 788L2431 802L2428.4 816L2425.6 830L2423.2 844L2421.9 858L2422.1 872L2423.6 886L2426 900L2428.5 914L2430.3 928L2430.8 942L2429.9 956L2427.7 970L2424.9 984L2422.2 998L2420.3 1012L2419.9 1026L2420.9 1040L2423 1054L2425.5 1068L2427.7 1082L2428.8 1096L2428.5 1110L2426.8 1124L2424.2 1138L2421.3 1152L2419.1 1166L2418 1180L2418.4 1194L2420.1 1208L2422.5 1222L2424.9 1236L2426.6 1250L2426.9 1264L2425.8 1278"/><path d="M2454.7 760L2454.7 774L2453.3 788L2450.9 802L2448 816L2445.5 830L2444.1 844L2444.1 858L2445.6 872L2447.9 886L2450.4 900L2452.3 914L2453 928L2452.2 942L2450.1 956L2447.3 970L2444.5 984L2442.6 998L2442 1012L2442.9 1026L2444.9 1040L2447.4 1054L2449.7 1068L2450.9 1082L2450.8 1096L2449.2 1110L2446.6 1124L2443.7 1138L2441.4 1152L2440.2 1166L2440.4 1180L2442 1194L2444.4 1208L2446.9 1222L2448.6 1236L2449.1 1250L2448.1 1264L2445.9 1278"/><path d="M2476.9 760L2475.7 774L2473.3 788L2470.4 802L2467.8 816L2466.3 830L2466.2 844L2467.5 858L2469.8 872L2472.4 886L2474.3 900L2475.1 914L2474.5 928L2472.5 942L2469.7 956L2466.9 970L2464.9 984L2464.2 998L2464.9 1012L2466.8 1026L2469.4 1040L2471.7 1054L2473 1068L2473 1082L2471.5 1096L2469 1110L2466.1 1124L2463.7 1138L2462.4 1152L2462.5 1166L2464 1180L2466.3 1194L2468.8 1208L2470.7 1222L2471.3 1236L2470.4 1250L2468.3 1264L2465.4 1278"/><path d="M2498 760L2495.7 774L2492.8 788L2490.2 802L2488.5 816L2488.3 830L2489.5 844L2491.7 858L2494.3 872L2496.3 886L2497.3 900L2496.7 914L2494.9 928L2492.1 942L2489.3 956L2487.2 970L2486.3 984L2486.9 998L2488.8 1012L2491.3 1026L2493.7 1040L2495.1 1054L2495.2 1068L2493.9 1082L2491.4 1096L2488.5 1110L2486 1124L2484.6 1138L2484.6 1152L2485.9 1166L2488.3 1180L2490.8 1194L2492.7 1208L2493.4 1222L2492.7 1236L2490.7 1250L2487.9 1264L2485.1 1278"/></g></g></g></mask>
</defs>
<g stroke="#c8c8c8" stroke-width="1.6" fill="none">
<path d="M1834.5 139L1895.8 1264"/>
<path d="M2475 1197.5L3136 982"/>
<path d="M2627 1147L2605 1134M2777.5 1098.7L2755.5 1085.7M2917.8 1052L2895.8 1039M3049 1008.7L3027 995.7"/>
<path d="M1458 880L1796 1262" stroke-dasharray="7 6"/>
<path d="M1458.5 917L1485 910.5M1509 978L1541 969.5M1567 1043.5L1598 1035M1629 1117L1660 1109.5M1697 1200L1730 1191" stroke-dasharray="2.4 3.2" stroke-width="2"/>
<path d="M1841 241L1821 232M1854.7 497L1836.4 486M1866 736L1849 724.5M1878 965.5L1861.8 950M1890.8 1179.6L1873.4 1162"/>
</g>
<g clip-path="url(#c1)">
<rect x="1800" y="120" width="760" height="760" fill="url(#stD)" />
<g mask="url(#mk1)"><rect x="1800" y="120" width="760" height="760" fill="url(#stL)" /></g>
<g filter="url(#d1)"><g mask="url(#m1x)"><g mask="url(#m1r)"><g fill="none" stroke="#f4f4f4" stroke-opacity="0.42" stroke-width="6"><ellipse cx="2335" cy="370" rx="30.4" ry="33.3"/><ellipse cx="2335" cy="370" rx="77.9" ry="85.3"/><ellipse cx="2335" cy="370" rx="125.4" ry="137.3"/><ellipse cx="2335" cy="370" rx="172.9" ry="189.3"/><ellipse cx="2335" cy="370" rx="220.4" ry="241.3"/><ellipse cx="2335" cy="370" rx="267.9" ry="293.3"/><ellipse cx="2335" cy="370" rx="315.4" ry="345.3"/><ellipse cx="2335" cy="370" rx="362.9" ry="397.3"/><ellipse cx="2335" cy="370" rx="410.4" ry="449.3"/><ellipse cx="2335" cy="370" rx="457.9" ry="501.3"/><ellipse cx="2335" cy="370" rx="505.4" ry="553.3"/><ellipse cx="2335" cy="370" rx="552.9" ry="605.3"/><ellipse cx="2335" cy="370" rx="600.4" ry="657.3"/><ellipse cx="2335" cy="370" rx="647.9" ry="709.3"/></g></g></g><g mask="url(#m1w)"><g fill="none" stroke="#f4f4f4" stroke-opacity="0.34" stroke-width="4"><path d="M1930 130L1934.6 144L1938.9 158L1942.5 172L1945.1 186L1946.7 200L1947.1 214L1946.3 228L1944.5 242L1941.8 256L1938.5 270L1935 284L1931.6 298L1928.6 312L1926.3 326L1925.1 340L1925 354L1926 368L1928.3 382L1931.5 396L1935.5 410L1940 424L1944.7 438L1949.1 452L1953 466L1956.1 480L1958.2 494L1959.1 508L1958.8 522L1957.4 536L1955 550L1952 564L1948.5 578L1945 592L1941.8 606L1939.2 620L1937.5 634L1936.9 648L1937.4 662L1939.2 676L1942 690L1945.7 704L1950 718L1954.7 732L1959.2 746L1963.4 760L1966.9 774L1969.4 788L1970.9 802L1971.1 816L1970.1 830L1968.1 844L1965.3 858L1962 872"/><path d="M1986.1 130L1990.6 144L1994.5 158L1997.7 172L1999.8 186L2000.8 200L2000.6 214L1999.2 228L1996.9 242L1993.9 256L1990.4 270L1986.9 284L1983.7 298L1981 312L1979.3 326L1978.6 340L1979.1 354L1980.7 368L1983.5 382L1987.2 396L1991.5 410L1996.1 424L2000.7 438L2004.9 452L2008.4 466L2011 480L2012.5 494L2012.8 508L2011.9 522L2010 536L2007.2 550L2003.9 564L2000.4 578L1997 592L1994.1 606L1991.9 620L1990.7 634L1990.7 648L1991.9 662L1994.2 676L1997.5 690L2001.6 704L2006.1 718L2010.7 732L2015.2 746L2019 760L2022.1 774L2024 788L2024.8 802L2024.4 816L2022.9 830L2020.5 844L2017.4 858L2013.9 872"/><path d="M2042.1 130L2046.4 144L2050 158L2052.6 172L2054.2 186L2054.5 200L2053.7 214L2051.9 228L2049.1 242L2045.9 256L2042.3 270L2038.9 284L2035.9 298L2033.7 312L2032.5 326L2032.4 340L2033.5 354L2035.8 368L2039 382L2043 396L2047.5 410L2052.2 424L2056.6 438L2060.5 452L2063.6 466L2065.7 480L2066.5 494L2066.2 508L2064.8 522L2062.4 536L2059.3 550L2055.9 564L2052.3 578L2049.1 592L2046.6 606L2044.9 620L2044.3 634L2044.9 648L2046.7 662L2049.5 676L2053.2 690L2057.6 704L2062.2 718L2066.8 732L2070.9 746L2074.4 760L2076.9 774L2078.3 788L2078.5 802L2077.5 816L2075.5 830L2072.7 844L2069.4 858L2065.8 872"/><path d="M2098.1 130L2102 144L2105.2 158L2107.3 172L2108.2 186L2108 200L2106.6 214L2104.3 228L2101.2 242L2097.8 256L2094.3 270L2091 284L2088.4 298L2086.7 312L2086 326L2086.5 340L2088.2 354L2091 368L2094.7 382L2099 396L2103.6 410L2108.2 424L2112.4 438L2115.9 452L2118.5 466L2120 480L2120.2 494L2119.3 508L2117.4 522L2114.6 536L2111.3 550L2107.8 564L2104.4 578L2101.4 592L2099.3 606L2098.2 620L2098.2 634L2099.4 648L2101.7 662L2105 676L2109.1 690L2113.6 704L2118.3 718L2122.7 732L2126.5 746L2129.5 760L2131.5 774L2132.3 788L2131.8 802L2130.3 816L2127.9 830L2124.8 844L2121.3 858L2117.8 872"/><path d="M2153.9 130L2157.5 144L2160.1 158L2161.6 172L2162 186L2161.1 200L2159.2 214L2156.5 228L2153.2 242L2149.7 256L2146.3 270L2143.3 284L2141.1 298L2139.9 312L2139.8 326L2141 340L2143.2 354L2146.5 368L2150.6 382L2155.1 396L2159.7 410L2164.2 424L2168 438L2171.1 452L2173.1 466L2174 480L2173.6 494L2172.2 508L2169.8 522L2166.7 536L2163.2 550L2159.7 564L2156.5 578L2153.9 592L2152.3 606L2151.7 620L2152.3 634L2154.1 648L2157 662L2160.8 676L2165.1 690L2169.7 704L2174.3 718L2178.5 732L2181.9 746L2184.4 760L2185.7 774L2185.9 788L2184.9 802L2182.9 816L2180.1 830L2176.7 844L2173.2 858L2169.8 872"/><path d="M2209.5 130L2212.7 144L2214.7 158L2215.7 172L2215.4 186L2214 200L2211.6 214L2208.6 228L2205.1 242L2201.6 256L2198.4 270L2195.8 284L2194.1 298L2193.4 312L2194 326L2195.7 340L2198.5 354L2202.2 368L2206.5 382L2211.2 396L2215.8 410L2219.9 424L2223.4 438L2226 452L2227.4 466L2227.6 480L2226.7 494L2224.7 508L2222 522L2218.6 536L2215.1 550L2211.7 564L2208.8 578L2206.7 592L2205.6 606L2205.6 620L2206.8 634L2209.2 648L2212.5 662L2216.6 676L2221.2 690L2225.8 704L2230.2 718L2234 732L2237 746L2238.9 760L2239.7 774L2239.2 788L2237.7 802L2235.2 816L2232.1 830L2228.6 844L2225.1 858L2222 872"/><path d="M2265 130L2267.6 144L2269.1 158L2269.4 172L2268.5 186L2266.6 200L2263.9 214L2260.6 228L2257 242L2253.6 256L2250.7 270L2248.5 284L2247.3 298L2247.3 312L2248.4 326L2250.7 340L2254 354L2258.1 368L2262.6 382L2267.3 396L2271.7 410L2275.5 424L2278.6 438L2280.6 452L2281.4 466L2281 480L2279.5 494L2277.1 508L2274 522L2270.5 536L2267 550L2263.9 564L2261.3 578L2259.7 592L2259.2 606L2259.8 620L2261.6 634L2264.5 648L2268.3 662L2272.6 676L2277.3 690L2281.8 704L2286 718L2289.4 732L2291.9 746L2293.2 760L2293.3 774L2292.3 788L2290.3 802L2287.4 816L2284.1 830L2280.5 844L2277.2 858L2274.3 872"/><path d="M2320.1 130L2322.2 144L2323.1 158L2322.8 172L2321.4 186L2319 200L2315.9 214L2312.5 228L2309 242L2305.8 256L2303.2 270L2301.5 284L2300.9 298L2301.4 312L2303.2 326L2306 340L2309.7 354L2314.1 368L2318.7 382L2323.3 396L2327.5 410L2330.9 424L2333.5 438L2334.9 452L2335.1 466L2334.1 480L2332.1 494L2329.3 508L2326 522L2322.4 536L2319.1 550L2316.2 564L2314.1 578L2313 592L2313 606L2314.3 620L2316.7 634L2320.1 648L2324.2 662L2328.7 676L2333.3 690L2337.7 704L2341.6 718L2344.5 732L2346.4 746L2347.1 760L2346.7 774L2345.1 788L2342.6 802L2339.4 816L2336 830L2332.5 844L2329.3 858L2326.9 872"/></g><g fill="none" stroke="#f4f4f4" stroke-opacity="0.3" stroke-width="4"><path d="M1930 130L1926.5 144L1923.4 158L1920.9 172L1919.3 186L1918.9 200L1919.6 214L1921.5 228L1924.5 242L1928.3 256L1932.7 270L1937.3 284L1941.9 298L1946 312L1949.3 326L1951.7 340L1953 354L1953 368L1951.9 382L1949.8 396L1946.9 410L1943.5 424L1940 438L1936.7 452L1933.9 466L1931.9 480L1930.9 494L1931.1 508L1932.6 522L1935.1 536L1938.6 550L1942.8 564L1947.3 578L1952 592L1956.3 606L1960 620L1962.8 634L1964.6 648L1965.1 662L1964.5 676L1962.8 690L1960.2 704L1957 718L1953.5 732L1950 746L1947 760L1944.6 774L1943.2 788L1942.9 802L1943.8 816L1945.9 830L1949 844L1952.9 858L1957.3 872"/><path d="M1981.9 130L1978.6 144L1975.7 158L1973.7 172L1972.7 186L1972.8 200L1974.2 214L1976.6 228L1980.1 242L1984.2 256L1988.8 270L1993.4 284L1997.8 298L2001.5 312L2004.4 326L2006.2 340L2006.8 354L2006.3 368L2004.6 382L2002.1 396L1998.9 410L1995.4 424L1991.9 438L1988.9 452L1986.4 466L1985 480L1984.6 494L1985.4 508L1987.4 522L1990.5 536L1994.4 550L1998.8 564L2003.4 578L2007.9 592L2012 606L2015.3 620L2017.6 634L2018.7 648L2018.7 662L2017.5 676L2015.3 690L2012.3 704L2008.9 718L2005.4 732L2002.1 746L1999.4 760L1997.5 774L1996.6 788L1996.9 802L1998.4 816L2001.1 830L2004.6 844L2008.8 858L2013.4 872"/><path d="M2033.9 130L2030.7 144L2028.3 158L2026.7 172L2026.3 186L2027.1 200L2029 214L2032 228L2035.8 242L2040.2 256L2044.9 270L2049.4 284L2053.5 298L2056.8 312L2059.2 326L2060.4 340L2060.4 354L2059.3 368L2057.2 382L2054.2 396L2050.9 410L2047.3 424L2044 438L2041.2 452L2039.3 466L2038.3 480L2038.6 494L2040 508L2042.6 522L2046.1 536L2050.3 550L2054.9 564L2059.5 578L2063.8 592L2067.5 606L2070.3 620L2072 634L2072.6 648L2071.9 662L2070.2 676L2067.6 690L2064.3 704L2060.8 718L2057.4 732L2054.3 746L2052 760L2050.6 774L2050.3 788L2051.3 802L2053.4 816L2056.5 830L2060.4 844L2064.9 858L2069.5 872"/><path d="M2085.9 130L2083.1 144L2081.1 158L2080.1 172L2080.3 186L2081.6 200L2084.1 214L2087.6 228L2091.7 242L2096.3 256L2100.9 270L2105.3 284L2109 298L2111.9 312L2113.7 326L2114.3 340L2113.7 354L2112 368L2109.5 382L2106.3 396L2102.8 410L2099.3 424L2096.2 438L2093.8 452L2092.4 466L2092 480L2092.9 494L2094.9 508L2098 522L2101.9 536L2106.3 550L2111 564L2115.5 578L2119.5 592L2122.8 606L2125 620L2126.2 634L2126.1 648L2124.9 662L2122.7 676L2119.7 690L2116.3 704L2112.8 718L2109.5 732L2106.7 746L2104.9 760L2104 774L2104.4 788L2105.9 802L2108.6 816L2112.1 830L2116.4 844L2121 858L2125.6 872"/><path d="M2138.1 130L2135.7 144L2134.1 158L2133.7 172L2134.5 186L2136.5 200L2139.5 214L2143.3 228L2147.8 242L2152.4 256L2156.9 270L2161 284L2164.3 298L2166.7 312L2167.8 326L2167.8 340L2166.7 354L2164.5 368L2161.6 382L2158.2 396L2154.7 410L2151.4 424L2148.6 438L2146.7 452L2145.8 466L2146 480L2147.5 494L2150.1 508L2153.6 522L2157.8 536L2162.4 550L2167 564L2171.3 578L2175 592L2177.8 606L2179.5 620L2180 634L2179.3 648L2177.6 662L2174.9 676L2171.7 690L2168.2 704L2164.7 718L2161.7 732L2159.4 746L2158 760L2157.8 774L2158.7 788L2160.9 802L2164 816L2167.9 830L2172.4 844L2177.1 858L2181.5 872"/><path d="M2190.5 130L2188.5 144L2187.5 158L2187.7 172L2189.1 186L2191.6 200L2195.1 214L2199.3 228L2203.8 242L2208.5 256L2212.8 270L2216.5 284L2219.4 298L2221.1 312L2221.7 326L2221.1 340L2219.4 354L2216.8 368L2213.6 382L2210.1 396L2206.6 410L2203.6 424L2201.2 438L2199.8 452L2199.5 466L2200.4 480L2202.4 494L2205.5 508L2209.4 522L2213.9 536L2218.5 550L2223 564L2227 578L2230.3 592L2232.5 606L2233.6 620L2233.5 634L2232.2 648L2230 662L2227 676L2223.6 690L2220.1 704L2216.8 718L2214.1 732L2212.3 746L2211.5 760L2211.8 774L2213.4 788L2216.1 802L2219.6 816L2223.9 830L2228.5 844L2233.1 858L2237.4 872"/><path d="M2243 130L2241.5 144L2241.2 158L2242 172L2244 186L2247 200L2250.9 214L2255.3 228L2259.9 242L2264.5 256L2268.5 270L2271.8 284L2274.1 298L2275.3 312L2275.2 326L2274.1 340L2271.9 354L2269 368L2265.6 382L2262 396L2258.7 410L2256 424L2254.1 438L2253.2 452L2253.5 466L2255 480L2257.6 494L2261.1 508L2265.3 522L2269.9 536L2274.6 550L2278.9 564L2282.5 578L2285.3 592L2286.9 606L2287.4 620L2286.7 634L2284.9 648L2282.3 662L2279 676L2275.5 690L2272.1 704L2269.1 718L2266.8 732L2265.4 746L2265.2 760L2266.2 774L2268.3 788L2271.5 802L2275.5 816L2279.9 830L2284.6 844L2289.1 858L2293 872"/><path d="M2295.9 130L2294.9 144L2295.2 158L2296.6 172L2299.1 186L2302.6 200L2306.8 214L2311.4 228L2316 242L2320.3 256L2324 270L2326.8 284L2328.6 298L2329.1 312L2328.5 326L2326.8 340L2324.2 354L2321 368L2317.5 382L2314 396L2310.9 410L2308.6 424L2307.2 438L2306.9 452L2307.8 466L2309.9 480L2313 494L2316.9 508L2321.4 522L2326 536L2330.5 550L2334.5 564L2337.8 578L2340 592L2341 606L2340.9 620L2339.6 634L2337.4 648L2334.4 662L2331 676L2327.5 690L2324.2 704L2321.5 718L2319.7 732L2318.9 746L2319.3 760L2320.9 774L2323.6 788L2327.2 802L2331.4 816L2336 830L2340.6 844L2344.9 858L2348.5 872"/></g></g></g>
</g>
<g clip-path="url(#cb1)"><rect x="1800" y="120" width="200" height="760" fill="url(#sb)" />
<path d="M1915 196L1912.3 202L1908.5 210.4L1904.1 220.3L1899.7 230.5L1896 240L1892.6 248.7L1889.1 257.3L1886 265.9L1883.8 274.8L1883 284L1883.8 292L1885.7 300.3L1888.3 308.8L1891.3 317.4L1894.4 326.1L1897 335L1899.1 342.8L1901.4 350.7L1903.7 358.8L1905.9 366.9L1907.9 375L1909.7 383.1L1911 391L1912 400.3L1912.6 409.9L1912.9 419.3L1912.8 428.5L1912.5 437.1L1912 445L1910.6 453.9L1908.4 460.6L1906.1 468.2L1904 480L1903.2 486.6L1902.1 494.3L1900.9 502.7L1899.7 511.8L1898.6 521.2L1897.6 530.7L1897 540.1L1896.8 549.1L1897.1 557.4L1898 565L1900.3 573.6L1903.7 581.7L1908 589.4L1912.8 596.6L1917.6 603.3L1922.1 609.6L1926.1 615.5L1929 621L1933.9 632.4L1936.1 640.7L1935 649L1930.9 656L1924.4 663L1917.4 670L1912 677L1906.7 685.8L1903.1 694.6L1904 705L1907.5 711.4L1913.1 718.5L1919.9 726L1926.9 733.5L1932.9 740.6L1937 747L1940.9 757.4L1941.2 766.2L1938 775L1932.8 780.5L1924.7 785.9L1916.1 791.4L1909.4 797L1907 803L1909.5 808.7L1915.4 815.1L1923.1 821.8L1931.2 828L1938.3 833.2L1943 837" fill="none" stroke="#e4e4e4" stroke-width="7" stroke-opacity=".9"/>
<path d="M1942.5 831.7L1930.2 828.8L1920 826L1905.8 821.8L1896 815L1892 806.9L1890.1 796.6L1890 784L1891.5 775.2L1894.5 765.3L1897.7 754.7L1900.3 743.8L1901 733L1899 722.1L1895.1 711L1890.5 699.6L1886.7 688.3L1885 677L1886.3 665.8L1889.8 654.6L1894 643.4L1897.5 632.2L1899 621L1897.9 609.9L1895.1 599L1891.4 588L1887.8 576.8L1885 565L1883.3 554.5L1881.8 543.4L1880.5 532.1L1879.4 520.9L1878.6 510.1L1878 500L1877.8 489.2L1878.1 479.4L1878.6 469.9L1879.3 460.3L1880 450L1880.9 438.7L1882.2 426.8L1883.5 414.7L1884.2 402.6L1884 391L1882.6 379.9L1880.2 369L1877.4 358.3L1874.5 347.7L1872 337L1869.8 326.2L1867.6 315.3L1865.6 304.5L1864 294L1863 284L1862.9 272.3L1863.7 261.3L1864.9 250.6L1866 240L1867 228.5L1868.1 216.6L1869.2 205.9L1870 198L1870.8 192.4L1871 192" fill="none" stroke="#4a4a4a" stroke-width="7" stroke-opacity=".5"/></g>
<g clip-path="url(#c2)">
<rect x="1850" y="740" width="680" height="540" fill="url(#stD)" />
<g mask="url(#mk2)"><rect x="1850" y="740" width="680" height="540" fill="url(#stL)" /></g>
<g filter="url(#d2)"><g mask="url(#m2r)"><g fill="none" stroke="#f4f4f4" stroke-opacity="0.5" stroke-width="6"><ellipse cx="2061" cy="1195" rx="43" ry="43"/><ellipse cx="2061" cy="1195" rx="93" ry="93"/><ellipse cx="2061" cy="1195" rx="143" ry="143"/><ellipse cx="2061" cy="1195" rx="193" ry="193"/><ellipse cx="2061" cy="1195" rx="243" ry="243"/><ellipse cx="2061" cy="1195" rx="293" ry="293"/><ellipse cx="2061" cy="1195" rx="343" ry="343"/><ellipse cx="2061" cy="1195" rx="393" ry="393"/><ellipse cx="2061" cy="1195" rx="443" ry="443"/><ellipse cx="2061" cy="1195" rx="493" ry="493"/><ellipse cx="2061" cy="1195" rx="543" ry="543"/></g></g><g mask="url(#m2w)"><g fill="none" stroke="#f4f4f4" stroke-opacity="0.35" stroke-width="4"><path d="M2120 760L2122.4 774L2124.1 788L2124.5 802L2123.4 816L2121.1 830L2118.2 844L2115.6 858L2113.9 872L2113.6 886L2114.8 900L2117 914L2119.5 928L2121.6 942L2122.6 956L2122.1 970L2120.3 984L2117.5 998L2114.7 1012L2112.5 1026L2111.6 1040L2112.2 1054L2114 1068L2116.5 1082L2118.9 1096L2120.4 1110L2120.6 1124L2119.3 1138L2116.8 1152L2114 1166L2111.4 1180L2109.9 1194L2109.9 1208L2111.2 1222L2113.5 1236L2116 1250L2118 1264L2118.8 1278"/><path d="M2144.4 760L2146.2 774L2146.7 788L2145.7 802L2143.5 816L2140.6 830L2137.9 844L2136.2 858L2135.7 872L2136.8 886L2138.9 900L2141.5 914L2143.6 928L2144.7 942L2144.4 956L2142.6 970L2140 984L2137.1 998L2134.8 1012L2133.8 1026L2134.3 1040L2136 1054L2138.4 1068L2140.9 1082L2142.5 1096L2142.8 1110L2141.6 1124L2139.2 1138L2136.4 1152L2133.8 1166L2132.2 1180L2132 1194L2133.2 1208L2135.4 1222L2138 1236L2140 1250L2140.9 1264L2140.3 1278"/><path d="M2168.2 760L2168.8 774L2168 788L2165.9 802L2163 816L2160.3 830L2158.4 844L2157.9 858L2158.8 872L2160.8 886L2163.4 900L2165.6 914L2166.8 928L2166.6 942L2165 956L2162.4 970L2159.5 984L2157.2 998L2156 1012L2156.3 1026L2157.9 1040L2160.4 1054L2162.8 1068L2164.5 1082L2165 1096L2163.9 1110L2161.6 1124L2158.8 1138L2156.1 1152L2154.4 1166L2154.1 1180L2155.2 1194L2157.4 1208L2159.9 1222L2162 1236L2163 1250L2162.6 1264L2160.8 1278"/><path d="M2191 760L2190.3 774L2188.2 788L2185.5 802L2182.7 816L2180.7 830L2180 844L2180.8 858L2182.8 872L2185.3 886L2187.6 900L2188.9 914L2188.8 928L2187.3 942L2184.8 956L2181.9 970L2179.5 984L2178.2 998L2178.4 1012L2179.9 1026L2182.3 1040L2184.8 1054L2186.6 1068L2187.1 1082L2186.2 1096L2184 1110L2181.2 1124L2178.5 1138L2176.7 1152L2176.2 1166L2177.2 1180L2179.3 1194L2181.8 1208L2184 1222L2185.2 1236L2184.9 1250L2183.2 1264L2180.5 1278"/><path d="M2212.5 760L2210.6 774L2207.9 788L2205.1 802L2203 816L2202.2 830L2202.8 844L2204.7 858L2207.2 872L2209.6 886L2211 900L2211.1 914L2209.7 928L2207.2 942L2204.3 956L2201.8 970L2200.4 984L2200.4 998L2201.9 1012L2204.2 1026L2206.7 1040L2208.6 1054L2209.3 1068L2208.5 1082L2206.4 1096L2203.6 1110L2200.9 1124L2198.9 1138L2198.3 1152L2199.2 1166L2201.2 1180L2203.8 1194L2206 1208L2207.3 1222L2207.1 1236L2205.5 1250L2202.9 1264L2200.1 1278"/><path d="M2233 760L2230.3 774L2227.5 788L2225.3 802L2224.3 816L2224.9 830L2226.7 844L2229.2 858L2231.5 872L2233.1 886L2233.3 900L2232 914L2229.6 928L2226.7 942L2224.2 956L2222.6 970L2222.5 984L2223.8 998L2226.1 1012L2228.7 1026L2230.6 1040L2231.5 1054L2230.8 1068L2228.8 1082L2226 1096L2223.2 1110L2221.2 1124L2220.5 1138L2221.2 1152L2223.2 1166L2225.7 1180L2228 1194L2229.4 1208L2229.3 1222L2227.9 1236L2225.4 1250L2222.5 1264L2220 1278"/><path d="M2252.7 760L2249.8 774L2247.6 788L2246.5 802L2246.9 816L2248.6 830L2251.1 844L2253.5 858L2255.1 872L2255.5 886L2254.3 900L2252 914L2249.1 928L2246.5 942L2244.9 956L2244.6 970L2245.8 984L2248.1 998L2250.6 1012L2252.7 1026L2253.6 1040L2253.1 1054L2251.2 1068L2248.5 1082L2245.6 1096L2243.5 1110L2242.6 1124L2243.2 1138L2245.1 1152L2247.6 1166L2250 1180L2251.4 1194L2251.5 1208L2250.2 1222L2247.8 1236L2244.9 1250L2242.4 1264L2240.9 1278"/><path d="M2272.2 760L2269.9 774L2268.7 788L2269 802L2270.6 816L2273 830L2275.5 844L2277.2 858L2277.7 872L2276.6 886L2274.4 900L2271.5 914L2268.9 928L2267.1 942L2266.7 956L2267.8 970L2270 984L2272.5 998L2274.7 1012L2275.7 1026L2275.3 1040L2273.5 1054L2270.9 1068L2268 1082L2265.8 1096L2264.8 1110L2265.3 1124L2267 1138L2269.5 1152L2271.9 1166L2273.5 1180L2273.8 1194L2272.5 1208L2270.2 1222L2267.3 1236L2264.7 1250L2263.1 1264L2263 1278"/><path d="M2292.2 760L2290.9 774L2291 788L2292.5 802L2294.9 816L2297.4 830L2299.2 844L2299.8 858L2298.9 872L2296.8 886L2294 900L2291.2 914L2289.4 928L2288.9 942L2289.8 956L2291.9 970L2294.5 984L2296.7 998L2297.8 1012L2297.6 1026L2295.9 1040L2293.3 1054L2290.4 1068L2288.1 1082L2287 1096L2287.3 1110L2289 1124L2291.4 1138L2293.9 1152L2295.6 1166L2295.9 1180L2294.9 1194L2292.6 1208L2289.7 1222L2287.1 1236L2285.4 1250L2285.1 1264L2286.2 1278"/><path d="M2313.1 760L2313.1 774L2314.5 788L2316.8 802L2319.3 816L2321.3 830L2322 844L2321.2 858L2319.2 872L2316.4 886L2313.6 900L2311.6 914L2311 928L2311.8 942L2313.8 956L2316.4 970L2318.6 984L2319.9 998L2319.8 1012L2318.3 1026L2315.7 1040L2312.8 1054L2310.4 1068L2309.2 1082L2309.4 1096L2311 1110L2313.4 1124L2315.8 1138L2317.6 1152L2318.1 1166L2317.2 1180L2315 1194L2312.1 1208L2309.4 1222L2307.6 1236L2307.2 1250L2308.2 1264L2310.3 1278"/><path d="M2335.2 760L2336.5 774L2338.8 788L2341.3 802L2343.3 816L2344.1 830L2343.5 844L2341.5 858L2338.8 872L2336 886L2333.9 900L2333.2 914L2333.9 928L2335.8 942L2338.3 956L2340.6 970L2342 984L2342 998L2340.6 1012L2338.1 1026L2335.2 1040L2332.8 1054L2331.4 1068L2331.5 1082L2332.9 1096L2335.3 1110L2337.8 1124L2339.7 1138L2340.3 1152L2339.5 1166L2337.3 1180L2334.5 1194L2331.8 1208L2329.9 1222L2329.3 1236L2330.2 1250L2332.3 1264L2334.8 1278"/><path d="M2358.5 760L2360.7 774L2363.2 788L2365.3 802L2366.3 816L2365.8 830L2363.9 844L2361.2 858L2358.4 872L2356.2 886L2355.3 900L2355.9 914L2357.7 928L2360.2 942L2362.6 956L2364.1 970L2364.2 984L2362.9 998L2360.5 1012L2357.6 1026L2355.1 1040L2353.6 1054L2353.6 1068L2354.9 1082L2357.2 1096L2359.7 1110L2361.7 1124L2362.4 1138L2361.7 1152L2359.7 1166L2356.9 1180L2354.2 1194L2352.2 1208L2351.5 1222L2352.2 1236L2354.2 1250L2356.7 1264L2359 1278"/><path d="M2382.6 760L2385.1 774L2387.3 788L2388.4 802L2388 816L2386.3 830L2383.6 844L2380.8 858L2378.5 872L2377.5 886L2377.9 900L2379.7 914L2382.1 928L2384.6 942L2386.2 956L2386.5 970L2385.3 984L2382.9 998L2380 1012L2377.4 1026L2375.8 1040L2375.6 1054L2376.9 1068L2379.1 1082L2381.7 1096L2383.7 1110L2384.6 1124L2384 1138L2382.1 1152L2379.4 1166L2376.6 1180L2374.4 1194L2373.6 1208L2374.3 1222L2376.2 1236L2378.7 1250L2381 1264L2382.5 1278"/><path d="M2407.1 760L2409.3 774L2410.5 788L2410.3 802L2408.6 816L2406 830L2403.2 844L2400.8 858L2399.7 872L2400 886L2401.6 900L2404.1 914L2406.5 928L2408.2 942L2408.6 956L2407.6 970L2405.3 984L2402.5 998L2399.8 1012L2398.1 1026L2397.8 1040L2398.9 1054L2401 1068L2403.6 1082L2405.7 1096L2406.7 1110L2406.3 1124L2404.5 1138L2401.8 1152L2398.9 1166L2396.7 1180L2395.8 1194L2396.3 1208L2398.1 1222L2400.6 1236L2403 1250L2404.5 1264L2404.7 1278"/><path d="M2431.3 760L2432.6 774L2432.5 788L2431 802L2428.4 816L2425.6 830L2423.2 844L2421.9 858L2422.1 872L2423.6 886L2426 900L2428.5 914L2430.3 928L2430.8 942L2429.9 956L2427.7 970L2424.9 984L2422.2 998L2420.3 1012L2419.9 1026L2420.9 1040L2423 1054L2425.5 1068L2427.7 1082L2428.8 1096L2428.5 1110L2426.8 1124L2424.2 1138L2421.3 1152L2419.1 1166L2418 1180L2418.4 1194L2420.1 1208L2422.5 1222L2424.9 1236L2426.6 1250L2426.9 1264L2425.8 1278"/><path d="M2454.7 760L2454.7 774L2453.3 788L2450.9 802L2448 816L2445.5 830L2444.1 844L2444.1 858L2445.6 872L2447.9 886L2450.4 900L2452.3 914L2453 928L2452.2 942L2450.1 956L2447.3 970L2444.5 984L2442.6 998L2442 1012L2442.9 1026L2444.9 1040L2447.4 1054L2449.7 1068L2450.9 1082L2450.8 1096L2449.2 1110L2446.6 1124L2443.7 1138L2441.4 1152L2440.2 1166L2440.4 1180L2442 1194L2444.4 1208L2446.9 1222L2448.6 1236L2449.1 1250L2448.1 1264L2445.9 1278"/><path d="M2476.9 760L2475.7 774L2473.3 788L2470.4 802L2467.8 816L2466.3 830L2466.2 844L2467.5 858L2469.8 872L2472.4 886L2474.3 900L2475.1 914L2474.5 928L2472.5 942L2469.7 956L2466.9 970L2464.9 984L2464.2 998L2464.9 1012L2466.8 1026L2469.4 1040L2471.7 1054L2473 1068L2473 1082L2471.5 1096L2469 1110L2466.1 1124L2463.7 1138L2462.4 1152L2462.5 1166L2464 1180L2466.3 1194L2468.8 1208L2470.7 1222L2471.3 1236L2470.4 1250L2468.3 1264L2465.4 1278"/><path d="M2498 760L2495.7 774L2492.8 788L2490.2 802L2488.5 816L2488.3 830L2489.5 844L2491.7 858L2494.3 872L2496.3 886L2497.3 900L2496.7 914L2494.9 928L2492.1 942L2489.3 956L2487.2 970L2486.3 984L2486.9 998L2488.8 1012L2491.3 1026L2493.7 1040L2495.1 1054L2495.2 1068L2493.9 1082L2491.4 1096L2488.5 1110L2486 1124L2484.6 1138L2484.6 1152L2485.9 1166L2488.3 1180L2490.8 1194L2492.7 1208L2493.4 1222L2492.7 1236L2490.7 1250L2487.9 1264L2485.1 1278"/></g></g></g>
</g>
<path d="M1893 858L1896.1 861.7L1900.8 866.7L1906.4 872.7L1912.4 879.3L1918.1 886.2L1923 893L1926.5 899.4L1928 905L1926 911.5L1920.4 917.6L1913.1 923.2L1905.7 928.8L1900 934.3L1898 940L1900.7 945.9L1907 951.7L1915.1 957.6L1923.1 963.5L1929.4 969.3L1932 975L1929.8 980.6L1924 986.2L1916.4 991.7L1908.9 997.1L1903.1 1002.6L1901 1008L1903.8 1013.4L1910.2 1018.7L1918.5 1024L1926.8 1029.3L1933.2 1034.6L1936 1040L1933.9 1045.5L1928.2 1051.1L1920.6 1056.8L1913 1062.4L1907.2 1067.8L1905 1073L1907.6 1077.9L1913.9 1082.5L1921.9 1087L1929.9 1091.4L1935.9 1095.7L1938 1100L1934.9 1104.2L1927.7 1108.1L1918.6 1112L1909.5 1116L1902.6 1120.3L1900 1125L1902.2 1129.4L1907.6 1134L1915 1138.8L1923.2 1143.8L1931 1149L1937 1154.4L1940 1160L1939.8 1165.8L1937.2 1171.7L1933.1 1177.7L1928.2 1184.1L1923.3 1190.7L1918.9 1197.6L1916 1205L1914.5 1212.3L1913.5 1220.6L1912.9 1229.4L1912.5 1238.3L1912.3 1246.9L1912.2 1254.7L1912.2 1261.2L1912 1266" fill="none" stroke="url(#sb2)" stroke-width="30" stroke-linejoin="round"/>
<path d="M1906 858L1909.1 861.7L1913.8 866.7L1919.4 872.7L1925.4 879.3L1931.1 886.2L1936 893L1939.5 899.4L1941 905L1939 911.5L1933.4 917.6L1926.1 923.2L1918.7 928.8L1913 934.3L1911 940L1913.7 945.9L1920 951.7L1928.1 957.6L1936.1 963.5L1942.4 969.3L1945 975L1942.8 980.6L1937 986.2L1929.4 991.7L1921.9 997.1L1916.1 1002.6L1914 1008L1916.8 1013.4L1923.2 1018.7L1931.5 1024L1939.8 1029.3L1946.2 1034.6L1949 1040L1946.9 1045.5L1941.2 1051.1L1933.6 1056.8L1926 1062.4L1920.2 1067.8L1918 1073L1920.6 1077.9L1926.9 1082.5L1934.9 1087L1942.9 1091.4L1948.9 1095.7L1951 1100L1947.9 1104.2L1940.7 1108.1L1931.6 1112L1922.5 1116L1915.6 1120.3L1913 1125L1915.2 1129.4L1920.6 1134L1928 1138.8L1936.2 1143.8L1944 1149L1950 1154.4L1953 1160L1952.8 1165.8L1950.2 1171.7L1946.1 1177.7L1941.2 1184.1L1936.3 1190.7L1931.9 1197.6L1929 1205L1927.5 1212.3L1926.5 1220.6L1925.9 1229.4L1925.5 1238.3L1925.3 1246.9L1925.2 1254.7L1925.2 1261.2L1925 1266" fill="none" stroke="#ececec" stroke-width="4" stroke-opacity=".85"/>
<path d="M1879 858L1882.1 861.7L1886.8 866.7L1892.4 872.7L1898.4 879.3L1904.1 886.2L1909 893L1912.5 899.4L1914 905L1912 911.5L1906.4 917.6L1899.1 923.2L1891.7 928.8L1886 934.3L1884 940L1886.7 945.9L1893 951.7L1901.1 957.6L1909.1 963.5L1915.4 969.3L1918 975L1915.8 980.6L1910 986.2L1902.4 991.7L1894.9 997.1L1889.1 1002.6L1887 1008L1889.8 1013.4L1896.2 1018.7L1904.5 1024L1912.8 1029.3L1919.2 1034.6L1922 1040L1919.9 1045.5L1914.2 1051.1L1906.6 1056.8L1899 1062.4L1893.2 1067.8L1891 1073L1893.6 1077.9L1899.9 1082.5L1907.9 1087L1915.9 1091.4L1921.9 1095.7L1924 1100L1920.9 1104.2L1913.7 1108.1L1904.6 1112L1895.5 1116L1888.6 1120.3L1886 1125L1888.2 1129.4L1893.6 1134L1901 1138.8L1909.2 1143.8L1917 1149L1923 1154.4L1926 1160L1925.8 1165.8L1923.2 1171.7L1919.1 1177.7L1914.2 1184.1L1909.3 1190.7L1904.9 1197.6L1902 1205L1900.5 1212.3L1899.5 1220.6L1898.9 1229.4L1898.5 1238.3L1898.3 1246.9L1898.2 1254.7L1898.2 1261.2L1898 1266" fill="none" stroke="#e0e0e0" stroke-width="2.5" stroke-opacity=".8"/>
<path d="M2420 738C2440 741 2462 750 2482 751L2470 766C2452 772 2436 760 2428 752Z" fill="#c9c9c9"/>
<path d="M2398 744C2404 736 2414 735 2420 738M2396 746C2398 756 2404 762 2412 766" fill="none" stroke="#9a9a9a" stroke-width="1.2"/>
<path d="M1893 854L1925 846M1903 880C1898 874 1897 866 1899 858" fill="none" stroke="#a8a8a8" stroke-width="1.2"/>
<path d="M1868 190L1871 178L1898 176L1896 186" fill="none" stroke="#8a8a8a" stroke-width="1.2" stroke-dasharray="4 3"/>
<path d="M1864 184C1868 178 1876 180 1878 186L1872 192Z" fill="#bdbdbd"/>
<path d="M2040 139C2060 146 2090 146 2120 140" fill="none" stroke="#a0a0a0" stroke-width="2"/>
<path d="M2858 139L2866 130" stroke="#aaa" stroke-width="1.4"/>
<g stroke-width="3" stroke-linecap="butt"><path d="M1626 1151V1093" stroke="#0000ff"/><path d="M1626 1151L1679 1140" stroke="#00e400"/><path d="M1626 1151L1658.5 1169.5" stroke="#ff0000"/></g>
<text x="1618.5" y="1088" font-size="21" font-family="Liberation Sans, sans-serif" fill="#cfcfcf">Z</text>
<text transform="matrix(.95 -.3 .45 .9 1683 1147)" font-size="19" font-family="Liberation Sans, sans-serif" fill="#cfcfcf">Y</text>
<text x="1659.5" y="1181" font-size="19" font-family="Liberation Sans, sans-serif" fill="#cfcfcf">X</text>
<text transform="matrix(0.66 0.52 -0.74 0.51 1479.5 890.5)" font-size="27.5" font-family="Liberation Sans, sans-serif" fill="#d4d4d4" stroke="#333" stroke-width=".9" paint-order="fill stroke">-600</text>
<text transform="matrix(0.66 0.52 -0.74 0.51 1586 1011)" font-size="32.5" font-family="Liberation Sans, sans-serif" fill="#d4d4d4" stroke="#333" stroke-width=".9" paint-order="fill stroke">-400</text>
<text transform="matrix(0.66 0.52 -0.74 0.51 1715 1157)" font-size="40" font-family="Liberation Sans, sans-serif" fill="#d4d4d4" stroke="#333" stroke-width=".9" paint-order="fill stroke">-200</text>
<text transform="matrix(1.33 -0.43 0.69 0.41 2613.9 1175)" font-size="30" font-family="Liberation Sans, sans-serif" fill="#d4d4d4" stroke="#333" stroke-width=".9" paint-order="fill stroke">400</text>
<text transform="matrix(1.33 -0.43 0.69 0.41 2903.5 1078)" font-size="30" font-family="Liberation Sans, sans-serif" fill="#d4d4d4" stroke="#333" stroke-width=".9" paint-order="fill stroke">600</text>
</svg>
</div>
<div style="left:1458px;top:1264px;width:1678px;height:1px;background:#5c5c5c"></div>
<div class="tb" style="left:1458px;top:1265px;width:1678px;height:86px"></div>
<div style="left:1458px;top:1351px;width:1678px;height:1px;background:#727272"></div>
<div class="dockhdr" style="left:1458px;top:1352px;width:1678px;height:43px"></div>
<div style="left:1458px;top:1395px;width:1678px;height:2px;background:#c4c4c4"></div>
<div class="dtitle t" id="cot" style="left:2211px;top:1364px;width:240px;">Console</div>
<div id="conbg" style="left:1458px;top:1397px;width:1678px;height:367px;background:#171717"></div>
<div id="con" style="left:0;top:0">
<div class="l" id="k0" style="top:1401px;letter-spacing:0.027px;">ECHO: 249</div>
<div class="l" id="k1" style="top:1433px;letter-spacing:0.475px;">Compiling design (CSG Products generation)...</div>
<div class="l" id="k2" style="top:1465px;letter-spacing:0.635px;">Geometries in cache: 225854</div>
<div class="l" id="k3" style="top:1497px;letter-spacing:0.503px;">Geometry cache size in bytes: 81391800</div>
<div class="l" id="k4" style="top:1529px;letter-spacing:0.311px;">CGAL Polyhedrons in cache: 0</div>
<div class="l" id="k5" style="top:1561px;letter-spacing:0.350px;">CGAL cache size in bytes: 0</div>
<div class="l" id="k6" style="top:1593px;letter-spacing:0.475px;">Compiling design (CSG Products normalization)...</div>
<div class="l" id="k7" style="top:1625px;letter-spacing:0.551px;">Normalized tree has 2250 elements!</div>
<div class="l" id="k8" style="top:1657px;letter-spacing:0.467px;">Compile and preview finished.</div>
<div class="l" id="k9" style="top:1689px;letter-spacing:0.702px;">Total rendering time: 0:00:53.470</div>
</div>

<svg style="left:0;top:0" width="3248" height="1966" viewBox="0 0 3248 1966">
<line x1="395.1" y1="189.5" x2="395.1" y2="268" stroke="#707070" stroke-width="2.4" stroke-dasharray="2.4 3.6"/>
<line x1="783.1" y1="189.5" x2="783.1" y2="268" stroke="#707070" stroke-width="2.4" stroke-dasharray="2.4 3.6"/>
<line x1="987.0" y1="189.5" x2="987.0" y2="268" stroke="#707070" stroke-width="2.4" stroke-dasharray="2.4 3.6"/>
<path d="M148.8 201.2H173.2a3.8 3.8 0 0 1 3.8 3.8V250.6a3.8 3.8 0 0 1-3.8 3.8H138.9a3.8 3.8 0 0 1-3.8-3.8V215.4Z" fill="none" stroke="#ffffff" stroke-width="2.8" stroke-linejoin="round"/>
<path d="M134 216.9V214.5L148.4 199.9H151V212.6a4.3 4.3 0 0 1-4.3 4.3Z" fill="#ffffff"/>
<path d="M146.7 233.3H164.9M155.8 224.2V242.4" stroke="#ffffff" stroke-width="2.7" fill="none"/>
<path d="M233.5 210H221.9V254.2H236" fill="none" stroke="#ffffff" stroke-width="3.6" stroke-linejoin="round"/>
<path d="M228.9 240V216.6L240.4 205.1H258.8a3 3 0 0 1 3 3V227" fill="none" stroke="#ffffff" stroke-width="2.2" stroke-linejoin="round"/>
<path d="M228.2 217.3L240.2 204.6H241.6V214a3.3 3.3 0 0 1-3.3 3.3Z" fill="#ffffff"/>
<path d="M263 218.7H265.2a1.5 1.5 0 0 1 1.5 1.5V227.4H263Z" fill="#ffffff"/>
<path d="M232.6 226.8H273.6a1 1 0 0 1 1 1.3L267.6 254.8a1.4 1.4 0 0 1-1.3 1H224.8Z" fill="#ffffff"/>
<path fill-rule="evenodd" fill="#ffffff" d="M312 199.8H326.3V222.7H353.7V199.8H357.3L368 210.2V255.8H312ZM319.4 228.4V251.9H360.8V228.4Z"/>
<rect x="343" y="203.5" width="7.6" height="16.4" fill="#ffffff"/>
<rect x="322.6" y="230.9" width="34.7" height="4.3" fill="#ffffff"/>
<rect x="322.6" y="237.8" width="34.7" height="4.3" fill="#ffffff"/>
<rect x="322.6" y="244.9" width="34.7" height="4.3" fill="#ffffff"/>
<path d="M427.9 217.6L427.9 237.2L447.6 237.2Z" fill="#9c9c9c"/><path d="M433.0 224.2C438.5 216.6 446 213.8 452.5 214C464.5 214.6 474 224 475.1 235.6L473.4 236.2C470.5 227 463 221.2 454 220.8C448.2 220.7 443.5 224.5 440.4 231.4Z" fill="#9c9c9c"/>
<path d="M568.3 217.6L568.3 237.2L548.6 237.2Z" fill="#ffffff"/><path d="M563.2 224.2C557.7 216.6 550.2 213.8 543.7 214C531.7 214.6 522.2 224 521.1 235.6L522.8 236.2C525.7 227 533.2 221.2 542.2 220.8C548.0 220.7 552.7 224.5 555.8 231.4Z" fill="#ffffff"/>
<rect x="614.0" y="211.1" width="44.1" height="5.9" fill="#ffffff"/>
<rect x="630.0" y="222.5" width="28.1" height="5.4" fill="#ffffff"/>
<rect x="630.0" y="233.5" width="28.1" height="5.4" fill="#ffffff"/>
<rect x="614.0" y="244.4" width="44.1" height="5.7" fill="#ffffff"/>
<path d="M613.4 230.8L624.6 220.8V240.8Z" fill="#ffffff"/>
<rect x="705.7" y="211.1" width="44.6" height="5.9" fill="#ffffff"/>
<rect x="722.2" y="222.5" width="28.1" height="5.4" fill="#ffffff"/>
<rect x="722.2" y="233.5" width="28.1" height="5.4" fill="#ffffff"/>
<rect x="705.7" y="244.4" width="44.6" height="5.7" fill="#ffffff"/>
<path d="M705.9 220.8L717.1 230.8L705.9 240.8Z" fill="#ffffff"/>
<g transform="translate(0 0)" fill="none" stroke="#ffffff" stroke-width="2.7" stroke-linecap="round" stroke-linejoin="round"><path d="M829.5 244.4L819.7 238.9V216.3L839.9 205L860.2 216.3V238.9L850.6 244.3" stroke-dasharray="3.4 4.1"/><path d="M822.5 217.8L839.9 227.6L857.5 217.8M839.9 227.6V243" stroke-dasharray="3.4 4.1"/><path d="M829.6 244.9H835.6L840.3 250.4L835.6 256H829.6L834.3 250.4ZM839.2 244.9H845.2L849.9 250.4L845.2 256H839.2L843.9 250.4Z" fill="#ffffff" stroke="none"/></g>
<g transform="translate(0 0)" fill="none" stroke="#ffffff" stroke-width="2.7" stroke-linecap="round" stroke-linejoin="round"><path d="M923 245L911.9 238.8V216.4L932.2 205L952.5 216.4V238.8L941.4 245"/><path d="M911.9 216.4L932.2 227.8L952.5 216.4M932.2 227.8V231.5"/><path d="M924.3 233.6H940.3M924.3 254.2H940.3" stroke-width="2.2" stroke-linecap="butt"/><path d="M926.2 234.4C926.6 240 930.6 241.6 932.3 243.9C934 241.6 938 240 938.4 234.4ZM926.2 253.4C926.6 247.8 930.6 246.2 932.3 243.9C934 246.2 938 247.8 938.4 253.4Z" stroke-width="1.5" stroke-linejoin="miter"/><path d="M929.2 237.4H935.4L932.3 242.2ZM928.6 252.6L932.3 248.2L936 252.6Z" fill="#ffffff" stroke="none"/></g>
<g transform="translate(0 0)"><path d="M1022.7 227.4V216.6L1037 201.6H1061a3.6 3.6 0 0 1 3.6 3.6V251a3.6 3.6 0 0 1-3.6 3.6H1059.6" fill="none" stroke="#ffffff" stroke-width="2.8" stroke-linejoin="round" stroke-linecap="round"/><path d="M1021.6 217.6L1036.6 200.4H1038.6V212.3a4.6 4.6 0 0 1-4.6 4.6Z" fill="#ffffff"/><text x="1016.4" y="255.2" font-family="Liberation Sans, sans-serif" font-weight="bold" font-size="28" fill="#ffffff" stroke="#ffffff" stroke-width="0.5" textLength="42.4" lengthAdjust="spacingAndGlyphs">STL</text></g>
<g transform="translate(91.7 0)"><path d="M1022.7 227.4V216.6L1037 201.6H1061a3.6 3.6 0 0 1 3.6 3.6V251a3.6 3.6 0 0 1-3.6 3.6H1059.6" fill="none" stroke="#ffffff" stroke-width="2.8" stroke-linejoin="round" stroke-linecap="round"/><path d="M1021.6 217.6L1036.6 200.4H1038.6V212.3a4.6 4.6 0 0 1-4.6 4.6Z" fill="#ffffff"/><text x="1016.4" y="255.2" font-family="Liberation Sans, sans-serif" font-weight="bold" font-size="28" fill="#ffffff" stroke="#ffffff" stroke-width="0.5" textLength="43.2" lengthAdjust="spacingAndGlyphs">SVG</text></g>
<g fill="none" stroke="#ffffff" stroke-width="2.7" stroke-linecap="round" stroke-linejoin="round"><path d="M1218.6 212.7L1208.3 218.6V239L1228 250.4L1247.7 239V218.6L1237.4 212.7"/><path d="M1208.3 218.6L1228 230L1247.7 218.6M1228 230V250.4"/><path d="M1228 219.6V203.4M1222.4 209.2L1228 203.2L1233.6 209.2"/></g>
<circle cx="130.0" cy="160.3" r="14.2" fill="#5d5d5d"/><circle cx="165.9" cy="160.3" r="14.2" fill="#5d5d5d"/>
<path d="M123.8 154.10000000000002L136.2 166.5M136.2 154.10000000000002L123.8 166.5" stroke="#1c1c1c" stroke-width="4.4" stroke-linecap="round"/>
<g fill="#5d5d5d" stroke="#1c1c1c" stroke-width="2.2" stroke-linejoin="round"><rect x="162.5" y="153.70000000000002" width="10.6" height="8.4"/><rect x="158.70000000000002" y="157.9" width="10.6" height="8.4"/></g>
<circle cx="1476.0" cy="1374.0" r="14.2" fill="#5d5d5d"/><circle cx="1511.7" cy="1374.0" r="14.2" fill="#5d5d5d"/>
<path d="M1469.8 1367.8L1482.2 1380.2M1482.2 1367.8L1469.8 1380.2" stroke="#1c1c1c" stroke-width="4.4" stroke-linecap="round"/>
<g fill="#5d5d5d" stroke="#1c1c1c" stroke-width="2.2" stroke-linejoin="round"><rect x="1508.3" y="1367.4" width="10.6" height="8.4"/><rect x="1504.5" y="1371.6" width="10.6" height="8.4"/></g>
<line x1="1649.1" y1="1270" x2="1649.1" y2="1348" stroke="#707070" stroke-width="2.4" stroke-dasharray="2.4 3.6"/>
<line x1="2221.0" y1="1270" x2="2221.0" y2="1348" stroke="#707070" stroke-width="2.4" stroke-dasharray="2.4 3.6"/>
<line x1="2793.0" y1="1270" x2="2793.0" y2="1348" stroke="#707070" stroke-width="2.4" stroke-dasharray="2.4 3.6"/>
<line x1="2997.1" y1="1270" x2="2997.1" y2="1348" stroke="#707070" stroke-width="2.4" stroke-dasharray="2.4 3.6"/>
<g transform="translate(662.2 1080)" fill="none" stroke="#ffffff" stroke-width="2.7" stroke-linecap="round" stroke-linejoin="round"><path d="M829.5 244.4L819.7 238.9V216.3L839.9 205L860.2 216.3V238.9L850.6 244.3" stroke-dasharray="3.4 4.1"/><path d="M822.5 217.8L839.9 227.6L857.5 217.8M839.9 227.6V243" stroke-dasharray="3.4 4.1"/><path d="M829.6 244.9H835.6L840.3 250.4L835.6 256H829.6L834.3 250.4ZM839.2 244.9H845.2L849.9 250.4L845.2 256H839.2L843.9 250.4Z" fill="#ffffff" stroke="none"/></g>
<g transform="translate(662.2 1080)" fill="none" stroke="#ffffff" stroke-width="2.7" stroke-linecap="round" stroke-linejoin="round"><path d="M923 245L911.9 238.8V216.4L932.2 205L952.5 216.4V238.8L941.4 245"/><path d="M911.9 216.4L932.2 227.8L952.5 216.4M932.2 227.8V231.5"/><path d="M924.3 233.6H940.3M924.3 254.2H940.3" stroke-width="2.2" stroke-linecap="butt"/><path d="M926.2 234.4C926.6 240 930.6 241.6 932.3 243.9C934 241.6 938 240 938.4 234.4ZM926.2 253.4C926.6 247.8 930.6 246.2 932.3 243.9C934 246.2 938 247.8 938.4 253.4Z" stroke-width="1.5" stroke-linejoin="miter"/><path d="M929.2 237.4H935.4L932.3 242.2ZM928.6 252.6L932.3 248.2L936 252.6Z" fill="#ffffff" stroke="none"/></g>
<g fill="none" stroke="#ffffff" stroke-linecap="round"><path d="M1688 1281.6H1679.6V1290M1712.8 1281.6H1721.2V1290M1679.6 1314.4V1322.8H1688M1721.2 1314.4V1322.8H1719" stroke-width="2.8" stroke-linejoin="round" stroke-linecap="butt"/><circle cx="1700.4" cy="1302.5" r="15.3" stroke-width="2.8"/><path d="M1708.3 1319.8L1717.6 1331.8" stroke-width="8.6" stroke-linecap="butt"/><path d="M1716.4 1330.4L1717.4 1331.6" stroke-width="8.6"/></g>
<g fill="none" stroke="#ffffff"><circle cx="1792.4" cy="1302.5" r="15.3" stroke-width="2.8"/><path d="M1800.3000000000002 1319.8L1809.6000000000001 1331.8" stroke-width="8.6"/><path d="M1808.4 1330.4L1809.4 1331.6" stroke-width="8.6" stroke-linecap="round"/><path d="M1783.0 1302.5H1801.8000000000002M1792.4 1293.1V1311.9" stroke-width="2.5"/></g>
<g fill="none" stroke="#ffffff"><circle cx="1884.3" cy="1302.5" r="15.3" stroke-width="2.8"/><path d="M1892.2 1319.8L1901.5 1331.8" stroke-width="8.6"/><path d="M1900.3 1330.4L1901.3 1331.6" stroke-width="8.6" stroke-linecap="round"/><path d="M1874.8999999999999 1302.5H1893.7" stroke-width="2.5"/></g>
<path d="M1965.6 1296.6A20 20 0 1 1 1964.4 1317.6" fill="none" stroke="#ffffff" stroke-width="2.4"/>
<path d="M1962 1300.2L1964.6 1289.2L1972.6 1296.8Z" fill="#ffffff"/>
<g stroke="#9c9c9c" fill="#9c9c9c"><path d="M2053.6 1284.8V1330.8M2094.4 1284.8V1330.8" stroke-width="2.6" fill="none"/><path d="M2062 1317.6H2086" stroke-width="3" fill="none"/><path d="M2054.4 1317.6L2065.4 1308V1327.4ZM2093.6 1317.6L2082.6 1308V1327.4Z" stroke="none"/><text x="2061.2" y="1308" font-family="Liberation Sans, sans-serif" font-weight="bold" font-size="29.5" stroke="#9c9c9c" stroke-width="0.9" textLength="22.6" lengthAdjust="spacingAndGlyphs">10</text></g>
<g stroke="#9c9c9c" fill="#9c9c9c"><path d="M2145 1306.6L2166.3 1327.6L2187.6 1306.6" stroke-width="3.8" fill="none" stroke-linecap="round" stroke-linejoin="miter"/><path d="M2151.6 1300.4C2153.4 1293.4 2159.6 1288 2167 1288C2173.4 1288 2178.4 1291 2181.4 1296" stroke-width="3" fill="none"/><path d="M2174 1297.6L2183.4 1289V1294.6L2183.6 1303.4Z" stroke="none"/><path d="M2173.6 1297.8L2183.6 1288.4L2184 1303.6Z" stroke="none"/><text x="2155.4" y="1318.6" font-family="Liberation Sans, sans-serif" font-weight="bold" font-size="29.5" stroke="#9c9c9c" stroke-width="0.9" textLength="24" lengthAdjust="spacingAndGlyphs">45</text></g>
<g stroke="#ffffff" stroke-width="2.3" fill="none"><path d="M2273.5 1289.3999999999999V1321.8M2257.2 1302.1L2289.6 1309.1999999999998M2265.4 1313.0L2281.5 1298.8"/></g>
<path d="M2283.5 1304.3C2288.7 1296.1 2302.7 1296.1 2307.8999999999996 1304.3C2302.7 1312.5 2288.7 1312.5 2283.5 1304.3Z" fill="#ffffff"/><circle cx="2295.7" cy="1304.3" r="4.5" fill="#2f2f2f"/>
<text x="2286.0" y="1335.6" font-family="Liberation Sans, sans-serif" font-size="30" fill="#ffffff" stroke="#ffffff" stroke-width="0.5" textLength="21" lengthAdjust="spacingAndGlyphs">+X</text>
<g stroke="#ffffff" stroke-width="2.3" fill="none"><path d="M2365.6 1289.2V1321.6000000000001M2349.2999999999997 1301.9L2381.7 1309.0M2357.5 1312.8000000000002L2373.6 1298.6000000000001"/></g>
<path d="M2338.7000000000003 1297.3C2343.9 1289.1 2357.9 1289.1 2363.1 1297.3C2357.9 1305.5 2343.9 1305.5 2338.7000000000003 1297.3Z" fill="#ffffff"/><circle cx="2350.9" cy="1297.3" r="4.5" fill="#2f2f2f"/>
<text x="2378.5" y="1335.6" font-family="Liberation Sans, sans-serif" font-size="30" fill="#ffffff" stroke="#ffffff" stroke-width="0.5" textLength="21" lengthAdjust="spacingAndGlyphs">-X</text>
<g stroke="#ffffff" stroke-width="2.3" fill="none"><path d="M2457.3 1289.2V1321.6000000000001M2441.0 1301.9L2473.4 1309.0M2449.2000000000003 1312.8000000000002L2465.3 1298.6000000000001"/></g>
<path d="M2460.8 1292.1C2466.0 1283.8999999999999 2480.0 1283.8999999999999 2485.2 1292.1C2480.0 1300.3 2466.0 1300.3 2460.8 1292.1Z" fill="#ffffff"/><circle cx="2473.0" cy="1292.1" r="4.5" fill="#2f2f2f"/>
<text x="2470.3" y="1335.6" font-family="Liberation Sans, sans-serif" font-size="30" fill="#ffffff" stroke="#ffffff" stroke-width="0.5" textLength="21" lengthAdjust="spacingAndGlyphs">+Y</text>
<g stroke="#ffffff" stroke-width="2.3" fill="none"><path d="M2549.5 1289.2V1321.6000000000001M2533.2 1301.9L2565.6 1309.0M2541.4 1312.8000000000002L2557.5 1298.6000000000001"/></g>
<path d="M2521.8 1318.1C2527.0 1309.8999999999999 2541.0 1309.8999999999999 2546.2 1318.1C2541.0 1326.3 2527.0 1326.3 2521.8 1318.1Z" fill="#ffffff"/><circle cx="2534.0" cy="1318.1" r="4.5" fill="#2f2f2f"/>
<text x="2562.8" y="1335.6" font-family="Liberation Sans, sans-serif" font-size="30" fill="#ffffff" stroke="#ffffff" stroke-width="0.5" textLength="21" lengthAdjust="spacingAndGlyphs">-Y</text>
<g stroke="#ffffff" stroke-width="2.3" fill="none"><path d="M2641.6 1288.8V1321.4M2625.2999999999997 1301.7L2657.7 1308.8M2633.5 1312.6000000000001L2649.6 1298.4"/></g>
<path d="M2629.4 1282.2C2634.6 1274.0 2648.6 1274.0 2653.7999999999997 1282.2C2648.6 1290.4 2634.6 1290.4 2629.4 1282.2Z" fill="#ffffff"/><circle cx="2641.6" cy="1282.2" r="4.5" fill="#2f2f2f"/>
<text x="2653.6" y="1335.6" font-family="Liberation Sans, sans-serif" font-size="30" fill="#ffffff" stroke="#ffffff" stroke-width="0.5" textLength="21" lengthAdjust="spacingAndGlyphs">+Z</text>
<g stroke="#ffffff" stroke-width="2.3" fill="none"><path d="M2733.7 1289.0V1323.2M2717.3999999999996 1301.7L2749.7999999999997 1308.8M2725.6 1312.6000000000001L2741.7 1298.4"/></g>
<path d="M2721.0 1328.7C2726.2 1320.5 2740.2 1320.5 2745.3999999999996 1328.7C2740.2 1336.9 2726.2 1336.9 2721.0 1328.7Z" fill="#ffffff"/><circle cx="2733.2" cy="1328.7" r="4.5" fill="#2f2f2f"/>
<text x="2746.4" y="1335.6" font-family="Liberation Sans, sans-serif" font-size="30" fill="#ffffff" stroke="#ffffff" stroke-width="0.5" textLength="21" lengthAdjust="spacingAndGlyphs">-Z</text>
<g fill="none" stroke="#ffffff" stroke-width="2.5" stroke-linejoin="round"><rect x="2824.8" y="1306.8" width="28.3" height="26.2"/><path d="M2824.8 1306.8L2872 1282.8H2875.2V1285.6L2853.1 1333M2853.1 1306.8L2875 1283.2"/></g>
<rect x="2900.2" y="1266" width="83.8" height="85" rx="9" fill="#393939"/>
<g fill="none" stroke="#ffffff" stroke-width="2.5" stroke-linejoin="round"><rect x="2919.6" y="1297" width="33.2" height="33.2"/><rect x="2931.4" y="1285.6" width="33.2" height="33.2"/><path d="M2919.6 1297L2931.4 1285.6M2952.8 1297L2964.6 1285.6M2919.6 1330.2L2931.4 1318.8M2952.8 1330.2L2964.6 1318.8"/></g>
<path d="M3104.6 1300.6H3108.2L3116.2 1309L3108.2 1317.4H3101L3109 1309ZM3116.2 1300.6H3119.8L3127.8 1309L3119.8 1317.4H3112.6L3120.6 1309Z" fill="#7c7c7c"/>
</svg>

<!-- status bar -->
<div style="left:112px;top:1764px;width:3024px;height:56px;background:#1e1e1e"></div>
<div style="left:112px;top:1764px;width:3024px;height:1px;background:#565656"></div>
<div class="t" id="stl" style="left:116.6px;top:1779px;font-size:26px;color:#fff;letter-spacing:0.723px;">Viewport: translate = [ 123.92 125.02 329.20 ], rotate = [ 70.40 0.00 57.90 ], distance = 1084.04, fov = 22.50 (839x562)</div>
<div class="t" id="str" style="left:2669px;top:1779px;font-size:26px;color:#fff;letter-spacing:0.592px;">OpenSCAD 2026.03.01 (git 447f1d69)</div>
</div></div>
<div id="rim"></div>
</body></html>
